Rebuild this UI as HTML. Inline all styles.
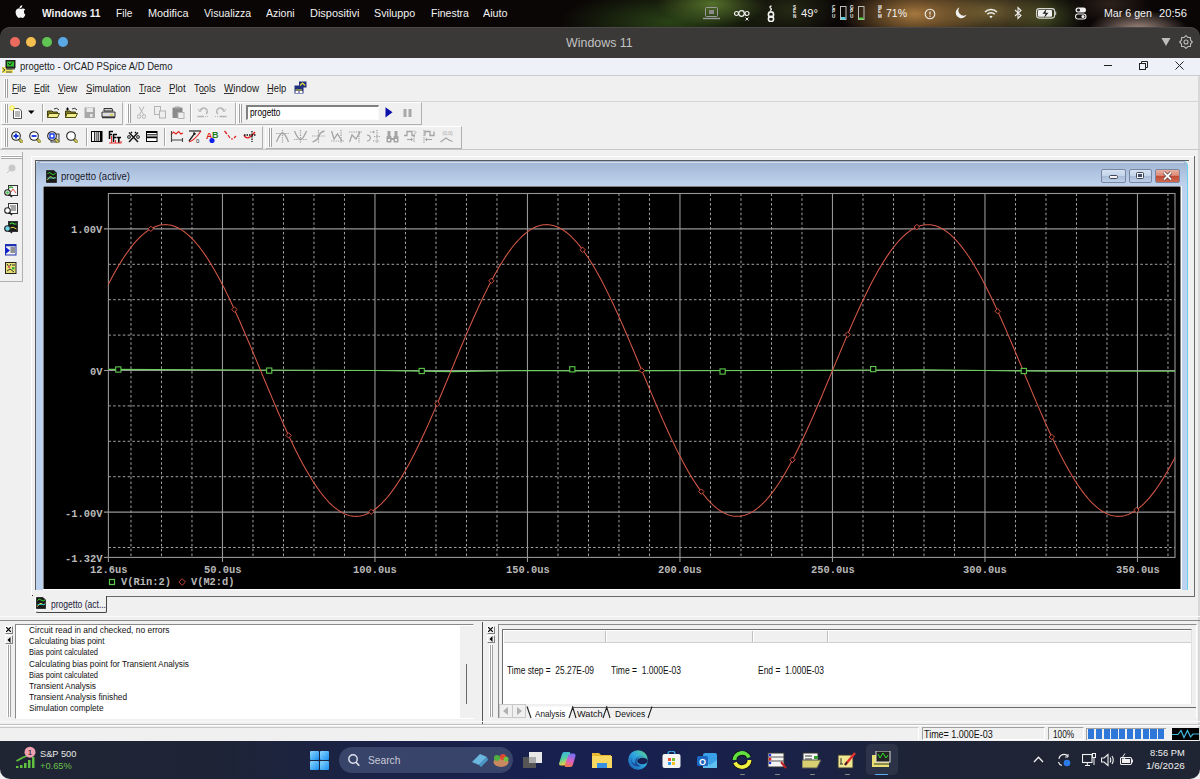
<!DOCTYPE html>
<html><head><meta charset="utf-8"><style>
html,body{margin:0;padding:0;width:1200px;height:779px;overflow:hidden;background:#f0f0f0;font-family:"Liberation Sans",sans-serif}
</style></head><body>
<div style="position:absolute;left:0px;top:0px;width:1200px;height:40px;background:radial-gradient(ellipse 55px 22px at 712px 4px, rgba(90,120,45,0.9), rgba(60,90,30,0) 100%),radial-gradient(ellipse 110px 34px at 670px 22px, rgba(45,72,24,0.9), rgba(40,60,20,0) 100%),radial-gradient(ellipse 50px 30px at 790px 10px, rgba(55,65,30,0.6), rgba(55,65,30,0) 100%),radial-gradient(ellipse 75px 32px at 915px 14px, rgba(165,120,62,1), rgba(140,100,50,0) 100%),radial-gradient(ellipse 70px 30px at 990px 12px, rgba(115,98,52,0.95), rgba(100,85,40,0) 100%),radial-gradient(ellipse 40px 26px at 1045px 16px, rgba(70,82,38,0.85), rgba(60,70,30,0) 100%),radial-gradient(ellipse 50px 20px at 1138px 30px, rgba(170,145,135,1), rgba(150,125,115,0) 100%),radial-gradient(ellipse 40px 20px at 1110px 4px, rgba(60,45,35,0.7), rgba(60,45,35,0) 100%),#0a0606"></div>
<div style="position:absolute;left:0px;top:27px;width:1200px;height:31px;background:#3a3938;border-radius:10px 10px 0 0;box-shadow:inset 0 1px 0 #4a4948"></div>
<div style="position:absolute;left:10.1px;top:36.9px;width:10px;height:10px;background:#ec6a5e;border-radius:50%"></div>
<div style="position:absolute;left:25.9px;top:36.9px;width:10px;height:10px;background:#f4bf4f;border-radius:50%"></div>
<div style="position:absolute;left:41.8px;top:36.9px;width:10px;height:10px;background:#61c554;border-radius:50%"></div>
<div style="position:absolute;left:57.6px;top:36.9px;width:10px;height:10px;background:#5aa9e6;border-radius:50%"></div>
<svg style="position:absolute;left:1161px;top:37px;" width="10" height="10" viewBox="0 0 10 10"><path d="M0.5,1 L9.5,1 L5,9 Z" fill="#bdbdbd"/></svg>
<svg style="position:absolute;left:1179px;top:35px;" width="14" height="14" viewBox="0 0 14 14"><g fill="none" stroke="#bdbdbd" stroke-width="1.1"><polygon points="13.30,7.00 11.53,8.88 11.45,11.45 8.88,11.53 7.00,13.30 5.12,11.53 2.55,11.45 2.47,8.88 0.70,7.00 2.47,5.12 2.55,2.55 5.12,2.47 7.00,0.70 8.88,2.47 11.45,2.55 11.53,5.12" stroke-linejoin="round"/><circle cx="7" cy="7" r="2"/></g></svg>
<div style="position:absolute;left:0px;top:57.5px;width:1200px;height:17.5px;background:#eef2f8"></div>
<div style="position:absolute;left:0px;top:74.5px;width:1200px;height:1px;background:#c9cbce"></div>
<div style="position:absolute;left:0px;top:75.5px;width:1200px;height:665.5px;background:#f0f0f0"></div>
<div style="position:absolute;left:1198px;top:75.5px;width:2px;height:665px;background:#d8d8d8"></div>
<svg style="position:absolute;left:1px;top:59px;" width="16" height="15" viewBox="0 0 16 15"><rect x="1" y="8" width="11" height="6" fill="#f0e860"/><path d="M1.5,9 L4,11 L1.5,13 M5,13 H11 M6,10 H11" stroke="#333" stroke-width="0.9" fill="none"/><rect x="4.5" y="1" width="10" height="8" fill="#222"/><rect x="6" y="2.5" width="7" height="5" fill="#30c030"/><path d="M7,4 L9,6 L11,3.5" stroke="#111" fill="none" stroke-width="0.9"/><rect x="5" y="9" width="9" height="1.5" fill="#555"/></svg>
<div style="position:absolute;left:1104px;top:65px;width:8px;height:1px;background:#222"></div>
<svg style="position:absolute;left:1139px;top:61px;" width="10" height="10" viewBox="0 0 10 10"><rect x="0.5" y="2.5" width="6" height="6" fill="none" stroke="#222"/><path d="M2.5,2.5 V0.5 H8.5 V6.5 H6.5" fill="none" stroke="#222"/></svg>
<svg style="position:absolute;left:1175px;top:61px;" width="10" height="10" viewBox="0 0 10 10"><path d="M0.5,0.5 L8.5,8.5 M8.5,0.5 L0.5,8.5" stroke="#222" stroke-width="1"/></svg>
<svg style="position:absolute;left:14.3px;top:5.2px;" width="12" height="14" viewBox="0 0 12 14"><path d="M8.2,2.6 C8.8,1.9 9.1,1 9,0 C8.2,0.1 7.3,0.6 6.7,1.3 C6.2,1.9 5.8,2.8 5.9,3.7 C6.8,3.8 7.6,3.3 8.2,2.6 Z M10.8,7.4 C10.8,5.8 12.1,5 12.2,5 C11.4,3.9 10.2,3.7 9.8,3.7 C8.8,3.6 7.8,4.3 7.3,4.3 C6.8,4.3 6,3.7 5.1,3.7 C4,3.7 2.9,4.4 2.3,5.4 C1.1,7.5 2,10.6 3.2,12.3 C3.8,13.1 4.4,14 5.3,14 C6.1,13.9 6.4,13.5 7.4,13.5 C8.4,13.5 8.6,14 9.5,14 C10.4,14 11,13.1 11.5,12.3 C12.1,11.4 12.4,10.5 12.4,10.4 C12.4,10.4 10.8,9.8 10.8,7.4 Z" fill="#f4f4f4" transform="scale(0.92)"/></svg>
<svg style="position:absolute;left:703px;top:7px;" width="17" height="13" viewBox="0 0 17 13"><rect x="2.5" y="0.5" width="12" height="9" rx="1" fill="none" stroke="#9a9a9a"/><rect x="6" y="3" width="5" height="4" fill="#8a8a8a"/><path d="M0,11.5 H17" stroke="#9a9a9a" stroke-width="1.4"/></svg>
<svg style="position:absolute;left:734px;top:9px;" width="16" height="12" viewBox="0 0 16 12"><circle cx="2.5" cy="4.5" r="2" fill="none" stroke="#f0f0f0" stroke-width="1.2"/><circle cx="7.5" cy="4.5" r="2.8" fill="none" stroke="#f0f0f0" stroke-width="1.3"/><circle cx="13" cy="4.5" r="2" fill="none" stroke="#f0f0f0" stroke-width="1.2"/><path d="M11.5,8.5 L14.5,11.5 M14.5,8.5 L11.5,11.5" stroke="#f0f0f0" stroke-width="1"/></svg>
<svg style="position:absolute;left:765px;top:5px;" width="12" height="17" viewBox="0 0 12 17"><path d="M6.5,1 Q4,1.5 5.5,3 Q7.5,4.5 5,5.5" fill="none" stroke="#f0f0f0" stroke-width="1.3"/><circle cx="6" cy="9.5" r="2.6" fill="none" stroke="#f0f0f0" stroke-width="1.6"/><circle cx="6" cy="14" r="2.6" fill="none" stroke="#f0f0f0" stroke-width="1.6"/></svg>
<div style="position:absolute;left:793px;top:5.5px;font:bold 4.6px/4.6px 'Liberation Sans',sans-serif;color:#f0f0f0">S</div><div style="position:absolute;left:793px;top:10.1px;font:bold 4.6px/4.6px 'Liberation Sans',sans-serif;color:#f0f0f0">E</div><div style="position:absolute;left:793px;top:14.7px;font:bold 4.6px/4.6px 'Liberation Sans',sans-serif;color:#f0f0f0">N</div>
<div style="position:absolute;left:832px;top:5.5px;font:bold 4.6px/4.6px 'Liberation Sans',sans-serif;color:#f0f0f0">C</div><div style="position:absolute;left:832px;top:10.1px;font:bold 4.6px/4.6px 'Liberation Sans',sans-serif;color:#f0f0f0">P</div><div style="position:absolute;left:832px;top:14.7px;font:bold 4.6px/4.6px 'Liberation Sans',sans-serif;color:#f0f0f0">U</div>
<div style="position:absolute;left:850px;top:5.5px;font:bold 4.6px/4.6px 'Liberation Sans',sans-serif;color:#f0f0f0">G</div><div style="position:absolute;left:850px;top:10.1px;font:bold 4.6px/4.6px 'Liberation Sans',sans-serif;color:#f0f0f0">P</div><div style="position:absolute;left:850px;top:14.7px;font:bold 4.6px/4.6px 'Liberation Sans',sans-serif;color:#f0f0f0">U</div>
<div style="position:absolute;left:878px;top:5.5px;font:bold 4.6px/4.6px 'Liberation Sans',sans-serif;color:#f0f0f0">M</div><div style="position:absolute;left:878px;top:10.1px;font:bold 4.6px/4.6px 'Liberation Sans',sans-serif;color:#f0f0f0">E</div><div style="position:absolute;left:878px;top:14.7px;font:bold 4.6px/4.6px 'Liberation Sans',sans-serif;color:#f0f0f0">M</div>
<svg style="position:absolute;left:840px;top:6px;" width="7" height="14" viewBox="0 0 7 14"><rect x="0.5" y="0.5" width="5.5" height="13" fill="none" stroke="#bdbdbd"/><rect x="1" y="11" width="4.5" height="2.5" fill="#5ad0e0"/></svg>
<svg style="position:absolute;left:858px;top:6px;" width="7" height="14" viewBox="0 0 7 14"><rect x="0.5" y="0.5" width="5.5" height="13" fill="none" stroke="#bdbdbd"/><rect x="1" y="11.5" width="4.5" height="2" fill="#50d040"/></svg>
<svg style="position:absolute;left:924px;top:8px;" width="12" height="12" viewBox="0 0 12 12"><circle cx="6" cy="6" r="4.8" fill="none" stroke="#f0f0f0" stroke-width="1.1"/><path d="M6,3.5 V6.5" stroke="#f0f0f0" stroke-width="1.2"/><circle cx="6" cy="8.3" r="0.7" fill="#f0f0f0"/></svg>
<svg style="position:absolute;left:955px;top:7px;" width="12" height="12" viewBox="0 0 12 12"><path d="M4.5,0.5 A5.5,5.5 0 1 0 11.5,7.5 A5,5 0 0 1 4.5,0.5 Z" fill="#f0f0f0"/></svg>
<svg style="position:absolute;left:984px;top:8px;" width="14" height="11" viewBox="0 0 14 11"><path d="M1,4 A8.5,8.5 0 0 1 13,4" fill="none" stroke="#f0f0f0" stroke-width="1.6"/><path d="M3.3,6.3 A5.2,5.2 0 0 1 10.7,6.3" fill="none" stroke="#f0f0f0" stroke-width="1.6"/><path d="M5.4,8.5 A2.3,2.3 0 0 1 8.6,8.5 L7,10.2 Z" fill="#f0f0f0"/></svg>
<svg style="position:absolute;left:1014px;top:6px;" width="8" height="14" viewBox="0 0 8 14"><path d="M1,4 L7,9.5 L4,12.5 V1.5 L7,4.5 L1,10" fill="none" stroke="#f0f0f0" stroke-width="1.1"/></svg>
<svg style="position:absolute;left:1036px;top:8px;" width="22" height="11" viewBox="0 0 22 11"><rect x="0.6" y="0.6" width="18" height="9.5" rx="2.5" fill="none" stroke="#d8d8d8" stroke-width="1.1"/><rect x="2" y="2" width="14" height="6.8" rx="1" fill="#f0f0f0"/><path d="M19.5,3.5 V7" stroke="#bbb" stroke-width="1.4"/><path d="M10.5,0.8 L6.5,5.8 H9.5 L8,10 L12.5,4.8 H9.5 Z" fill="#222"/></svg>
<svg style="position:absolute;left:1075px;top:7px;" width="12" height="13" viewBox="0 0 12 13"><rect x="0.5" y="0.5" width="10.5" height="5" rx="2.5" fill="#f0f0f0"/><circle cx="3.5" cy="3" r="1.6" fill="#222"/><rect x="0.5" y="7" width="10.5" height="5" rx="2.5" fill="none" stroke="#f0f0f0" stroke-width="1.1"/><circle cx="8" cy="9.5" r="1.6" fill="#f0f0f0"/></svg>
<div style="position:absolute;left:4px;top:79px;width:1px;height:19px;background:#fff;box-shadow:1px 0 0 #a0a0a0, 2px 0 0 #fff, 3px 0 0 #a0a0a0"></div>
<div style="position:absolute;left:12px;top:93px;width:6px;height:1px;background:#333"></div>
<div style="position:absolute;left:34px;top:93px;width:6px;height:1px;background:#333"></div>
<div style="position:absolute;left:58px;top:93px;width:6px;height:1px;background:#333"></div>
<div style="position:absolute;left:85.7px;top:93px;width:6px;height:1px;background:#333"></div>
<div style="position:absolute;left:138.7px;top:93px;width:6px;height:1px;background:#333"></div>
<div style="position:absolute;left:169px;top:93px;width:6px;height:1px;background:#333"></div>
<div style="position:absolute;left:200px;top:93px;width:6px;height:1px;background:#333"></div>
<div style="position:absolute;left:223.7px;top:93px;width:10px;height:1px;background:#333"></div>
<div style="position:absolute;left:266.7px;top:93px;width:6px;height:1px;background:#333"></div>
<svg style="position:absolute;left:294px;top:81px;" width="13" height="13" viewBox="0 0 13 13"><rect x="0.5" y="4.5" width="9" height="8" fill="#203080"/><rect x="5" y="0.5" width="7.5" height="6" fill="#203080"/><path d="M6,4.5 L8.5,2 L11,4.5" stroke="#e8e030" fill="none" stroke-width="1.2"/><path d="M1.5,9 H8" stroke="#e8e030"/><rect x="1.5" y="10" width="3" height="2" fill="#fff"/><rect x="5.5" y="10" width="3" height="2" fill="#fff"/></svg>
<div style="position:absolute;left:0px;top:100.5px;width:1200px;height:1px;background:#d5d5d5"></div>
<div style="position:absolute;left:0px;top:149px;width:1200px;height:1px;background:#c8c8c8"></div>
<div style="position:absolute;left:1px;top:101.5px;width:122px;height:23.0px;box-sizing:border-box;border-right:1px solid #b0b0b0;border-bottom:1px solid #b0b0b0;border-top:1px solid #fff;border-left:1px solid #fff"></div>
<div style="position:absolute;left:125px;top:101.5px;width:111px;height:23.0px;box-sizing:border-box;border-right:1px solid #b0b0b0;border-bottom:1px solid #b0b0b0;border-top:1px solid #fff;border-left:1px solid #fff"></div>
<div style="position:absolute;left:236px;top:101.5px;width:186px;height:23.0px;box-sizing:border-box;border-right:1px solid #b0b0b0;border-bottom:1px solid #b0b0b0;border-top:1px solid #fff;border-left:1px solid #fff"></div>
<div style="position:absolute;left:4px;top:104px;width:1px;height:19px;background:#fff;box-shadow:1px 0 0 #a0a0a0, 2px 0 0 #fff, 3px 0 0 #a0a0a0"></div>
<div style="position:absolute;left:127px;top:104px;width:1px;height:19px;background:#fff;box-shadow:1px 0 0 #a0a0a0, 2px 0 0 #fff, 3px 0 0 #a0a0a0"></div>
<div style="position:absolute;left:238px;top:104px;width:1px;height:19px;background:#fff;box-shadow:1px 0 0 #a0a0a0, 2px 0 0 #fff, 3px 0 0 #a0a0a0"></div>
<div style="position:absolute;left:1px;top:125.5px;width:262px;height:23.5px;box-sizing:border-box;border-right:1px solid #b0b0b0;border-bottom:1px solid #b0b0b0;border-top:1px solid #fff;border-left:1px solid #fff"></div>
<div style="position:absolute;left:265px;top:125.5px;width:197px;height:23.5px;box-sizing:border-box;border-right:1px solid #b0b0b0;border-bottom:1px solid #b0b0b0;border-top:1px solid #fff;border-left:1px solid #fff"></div>
<div style="position:absolute;left:4px;top:128px;width:1px;height:19px;background:#fff;box-shadow:1px 0 0 #a0a0a0, 2px 0 0 #fff, 3px 0 0 #a0a0a0"></div>
<div style="position:absolute;left:268px;top:128px;width:1px;height:19px;background:#fff;box-shadow:1px 0 0 #a0a0a0, 2px 0 0 #fff, 3px 0 0 #a0a0a0"></div>
<div style="position:absolute;left:41.5px;top:104px;width:1px;height:18px;background:#a8a8a8;box-shadow:1px 0 0 #fff"></div>
<div style="position:absolute;left:190.4px;top:104px;width:1px;height:18px;background:#a8a8a8;box-shadow:1px 0 0 #fff"></div>
<div style="position:absolute;left:85.8px;top:128px;width:1px;height:18px;background:#a8a8a8;box-shadow:1px 0 0 #fff"></div>
<div style="position:absolute;left:164.4px;top:128px;width:1px;height:18px;background:#a8a8a8;box-shadow:1px 0 0 #fff"></div>
<svg style="position:absolute;left:9px;top:105px;" width="14" height="14" viewBox="0 0 14 14"><path d="M4.5,3.5 H10 L12.5,6 V13.5 H4.5 Z" fill="#fff" stroke="#505050"/><path d="M6,7 H11 M6,9 H11 M6,11 H11" stroke="#707070"/><path d="M3,0 V6 M0,3 H6 M0.8,0.8 L5.2,5.2 M5.2,0.8 L0.8,5.2" stroke="#f8f040" stroke-width="1.1"/><circle cx="3" cy="3" r="1.4" fill="#fffbb0"/></svg>
<svg style="position:absolute;left:28px;top:110px;" width="7" height="5" viewBox="0 0 7 5"><path d="M0,0.5 H6.5 L3.25,4 Z" fill="#000"/></svg>
<svg style="position:absolute;left:47px;top:107px;" width="14" height="12" viewBox="0 0 14 12"><path d="M0.5,4 H5 L6,5 H10.5 V10.5 H0.5 Z" fill="#807a20" stroke="#403c10"/><path d="M2,6.5 H12.5 L10.5,10.5 H0.5 Z" fill="#f0ee90" stroke="#50500e"/><path d="M7,2 Q10,0 12,3" stroke="#333" fill="none"/></svg>
<svg style="position:absolute;left:65px;top:107px;" width="14" height="12" viewBox="0 0 14 12"><path d="M0.5,4 H5 L6,5 H10.5 V10.5 H0.5 Z" fill="#807a20" stroke="#403c10"/><path d="M2,6.5 H12.5 L10.5,10.5 H0.5 Z" fill="#f0ee90" stroke="#50500e"/><path d="M1,2 H4 M2.5,0.5 V3.5" stroke="#000"/><path d="M7,2 Q10,0 12,3" stroke="#333" fill="none"/></svg>
<svg style="position:absolute;left:84px;top:107px;" width="12" height="12" viewBox="0 0 12 12"><rect x="0.5" y="0.5" width="10.5" height="10.5" fill="#a8a8a8"/><rect x="2.5" y="1" width="6.5" height="4" fill="#e8e8e8"/><rect x="6" y="7" width="2.5" height="3" fill="#e8e8e8"/></svg>
<svg style="position:absolute;left:101px;top:106px;" width="15" height="13" viewBox="0 0 15 13"><path d="M3,2.5 H11 L12,5 H3 Z" fill="#ccc" stroke="#333"/><path d="M1,6 H14 V11 H1 Z" fill="#ddd" stroke="#333"/><rect x="9" y="8" width="3" height="1.5" fill="#e0d040"/><path d="M1,11.5 H14" stroke="#333" stroke-width="1.5"/></svg>
<svg style="position:absolute;left:137px;top:106px;" width="9" height="13" viewBox="0 0 9 13"><circle cx="2" cy="10.5" r="1.8" fill="none" stroke="#b4b4b4"/><circle cx="7" cy="10.5" r="1.8" fill="none" stroke="#b4b4b4"/><path d="M2.5,8.8 L7,0.5 M6.5,8.8 L2,0.5" stroke="#b4b4b4"/></svg>
<svg style="position:absolute;left:154px;top:106px;" width="13" height="13" viewBox="0 0 13 13"><rect x="0.5" y="0.5" width="6" height="8" fill="#eee" stroke="#b4b4b4"/><rect x="5.5" y="5" width="6" height="7" fill="#eee" stroke="#b4b4b4"/></svg>
<svg style="position:absolute;left:172px;top:106px;" width="13" height="13" viewBox="0 0 13 13"><rect x="0.5" y="1.5" width="10" height="10.5" rx="1" fill="#8a8a8a"/><rect x="6" y="6.5" width="6" height="6" fill="#eee" stroke="#b4b4b4"/><rect x="3" y="0.5" width="5" height="2" fill="#aaa"/></svg>
<svg style="position:absolute;left:197px;top:106px;" width="13" height="13" viewBox="0 0 13 13"><path d="M3,4 Q7,0 10,4 Q11,7 9,8" fill="none" stroke="#b4b4b4" stroke-width="1.3"/><path d="M1,3 L3,6 L5,3" fill="none" stroke="#b4b4b4"/><path d="M0.5,10.5 H7" stroke="#b4b4b4" stroke-width="1.5"/><path d="M8,10.5 H12" stroke="#b4b4b4" stroke-dasharray="1 1"/></svg>
<svg style="position:absolute;left:214px;top:106px;" width="13" height="13" viewBox="0 0 13 13"><path d="M10,4 Q6,0 3,4 Q2,7 4,8" fill="none" stroke="#b4b4b4" stroke-width="1.3"/><path d="M12,3 L10,6 L8,3" fill="none" stroke="#b4b4b4"/><path d="M5.5,10.5 H12.5" stroke="#b4b4b4" stroke-width="1.5"/><path d="M1,10.5 H5" stroke="#b4b4b4" stroke-dasharray="1 1"/></svg>
<div style="position:absolute;left:245.8px;top:105px;width:133px;height:14.7px;box-sizing:border-box;background:#fff;border-top:2px solid #808080;border-left:2px solid #808080;border-bottom:1px solid #fafafa;border-right:1px solid #fafafa"></div>
<svg style="position:absolute;left:385px;top:107px;" width="8" height="11" viewBox="0 0 8 11"><path d="M0.5,0.3 L7.5,5.3 L0.5,10.5 Z" fill="#0a10a8"/></svg>
<svg style="position:absolute;left:403px;top:108.5px;" width="9" height="8" viewBox="0 0 9 8"><rect x="0.5" y="0" width="3" height="8" fill="#a8a8a8"/><rect x="5.5" y="0" width="3" height="8" fill="#a8a8a8"/></svg>
<svg style="position:absolute;left:11px;top:130.5px;" width="12" height="12" viewBox="0 0 12 12"><path d="M7.5,7.5 L11.5,11.5" stroke="#505010" stroke-width="3"/><path d="M7.5,7.5 L11.5,11.5" stroke="#d8d060" stroke-width="1.6"/><circle cx="5" cy="5" r="4.3" fill="#fff" stroke="#222" stroke-width="1.1"/><path d="M2.5,5 H7.5 M5,2.5 V7.5" stroke="#1030e0" stroke-width="1.8"/></svg>
<svg style="position:absolute;left:29px;top:130.5px;" width="12" height="12" viewBox="0 0 12 12"><path d="M7.5,7.5 L11.5,11.5" stroke="#505010" stroke-width="3"/><path d="M7.5,7.5 L11.5,11.5" stroke="#d8d060" stroke-width="1.6"/><circle cx="5" cy="5" r="4.3" fill="#fff" stroke="#222" stroke-width="1.1"/><path d="M2.5,5 H7.5" stroke="#1030e0" stroke-width="1.8"/></svg>
<svg style="position:absolute;left:47px;top:130.5px;" width="13" height="12" viewBox="0 0 13 12"><rect x="4" y="3" width="8" height="8" fill="#ddd" stroke="#444"/><path d="M7.5,7.5 L11.5,11.5" stroke="#505010" stroke-width="3"/><path d="M7.5,7.5 L11.5,11.5" stroke="#d8d060" stroke-width="1.6"/><circle cx="5" cy="5" r="4.3" fill="#fff" stroke="#222" stroke-width="1.1"/><rect x="3" y="3" width="4" height="4" fill="none" stroke="#1030e0" stroke-width="1.4"/></svg>
<svg style="position:absolute;left:66px;top:130.5px;" width="12" height="12" viewBox="0 0 12 12"><path d="M7.5,7.5 L11.5,11.5" stroke="#505010" stroke-width="3"/><path d="M7.5,7.5 L11.5,11.5" stroke="#d8d060" stroke-width="1.6"/><circle cx="5" cy="5" r="4.3" fill="#fff" stroke="#222" stroke-width="1.1"/></svg>
<svg style="position:absolute;left:91px;top:131px;" width="12" height="11" viewBox="0 0 12 11"><rect x="0.5" y="0.5" width="10.5" height="10" fill="#fff" stroke="#000"/><rect x="1" y="1" width="1.5" height="9" fill="#fff"/><rect x="3" y="1" width="1" height="9" fill="#303030"/><rect x="4" y="1" width="1" height="9" fill="#c8c8c8"/><rect x="5" y="1" width="1" height="9" fill="#808080"/><rect x="6" y="1" width="1" height="9" fill="#a0a0a0"/><rect x="7" y="1" width="1" height="9" fill="#606060"/><rect x="8" y="1" width="1" height="9" fill="#d0d0d0"/><rect x="9" y="1" width="2" height="9" fill="#000"/></svg>
<svg style="position:absolute;left:108px;top:130px;" width="15" height="14" viewBox="0 0 15 14"><path d="M1.5,1 V9 M1.5,1.5 H5 M1.5,4.5 H4" stroke="#000" stroke-width="1.5" fill="none"/><path d="M5.5,4 V12 M5.5,4.5 H9 M5.5,7.5 H8" stroke="#000" stroke-width="1.5" fill="none"/><path d="M8.5,7.5 H13 M10.8,7.5 V13" stroke="#000" stroke-width="1.6" fill="none"/><path d="M1,13 H13.5 M3.5,6 V13 M7.5,10 V13 M13,11 V13" stroke="#e83030" stroke-width="1" fill="none"/></svg>
<svg style="position:absolute;left:127px;top:130.5px;" width="13" height="12" viewBox="0 0 13 12"><path d="M2,1.5 L11,11 M11,1.5 L2,11" stroke="#111" stroke-width="1.4"/><circle cx="2" cy="6" r="1.6" fill="#999" stroke="#333" stroke-width="0.8"/><circle cx="11" cy="6" r="1.6" fill="#999" stroke="#333" stroke-width="0.8"/><path d="M4,1 L5,2 M9,1 L8,2" stroke="#000" stroke-width="1.5"/></svg>
<svg style="position:absolute;left:145.8px;top:131px;" width="12" height="11" viewBox="0 0 12 11"><rect x="0.5" y="0.5" width="10.5" height="10" fill="#fff" stroke="#000"/><rect x="1" y="1" width="10" height="1" fill="#000"/><rect x="1" y="3" width="10" height="1" fill="#505050"/><rect x="1" y="4" width="10" height="1" fill="#b0b0b0"/><rect x="1" y="5" width="10" height="1" fill="#707070"/><rect x="1" y="6" width="10" height="1.2" fill="#000"/></svg>
<svg style="position:absolute;left:169.7px;top:130px;" width="14" height="13" viewBox="0 0 14 13"><path d="M1,5 L3.5,2 L6,4 L8.5,1.5 L11,4 L13,3" fill="none" stroke="#e02020" stroke-width="1.1"/><path d="M1.5,1 V12 M1.5,10 H13 M12.5,8 V12" stroke="#444" stroke-width="1.1"/></svg>
<svg style="position:absolute;left:187.8px;top:130px;" width="14" height="13" viewBox="0 0 14 13"><path d="M1,1 H13" stroke="#222" stroke-width="1.2"/><path d="M1,11 L7,3" stroke="#222" stroke-width="1.3"/><path d="M5,3 H7 V5" stroke="#222"/><path d="M1,12 Q7,10 13,1" stroke="#e02020" fill="none" stroke-width="1.1"/><text x="8" y="12.5" font-family="Liberation Sans" font-size="6" fill="#222">0</text></svg>
<svg style="position:absolute;left:205.8px;top:130px;" width="14" height="13" viewBox="0 0 14 13"><text x="0" y="9" font-family="Liberation Sans" font-weight="bold" font-size="9" fill="#e02020">A</text><text x="6" y="8" font-family="Liberation Sans" font-weight="bold" font-size="9" fill="#208020">B</text><circle cx="6" cy="10.5" r="2.6" fill="#1020f0"/></svg>
<svg style="position:absolute;left:224px;top:130px;" width="14" height="12" viewBox="0 0 14 12"><path d="M0.5,1 L3,4 M4,5 L6,8 M7,9 L9,9 M10,8 L12,6" stroke="#e02020" stroke-width="1.2"/></svg>
<svg style="position:absolute;left:242.6px;top:130px;" width="14" height="13" viewBox="0 0 14 13"><path d="M1,5 Q4,12 12,2" fill="none" stroke="#e02020" stroke-width="1.4"/><path d="M1,5 H13 M9,1 V12" stroke="#111" stroke-dasharray="1.5 1" stroke-width="1.3"/></svg>
<svg style="position:absolute;left:276px;top:130px;" width="14" height="14" viewBox="0 0 14 14"><path d="M0.5,12 Q4,3 6.5,3 Q9,3 12.5,12" fill="none" stroke="#a4a4a4" stroke-width="1.3"/><path d="M0,3.5 H13" stroke="#a4a4a4" stroke-width="1.2" stroke-dasharray="1.3 1"/><path d="M6.5,0 V13" stroke="#a4a4a4" stroke-width="1.2" stroke-dasharray="1.3 1"/></svg>
<svg style="position:absolute;left:294px;top:130px;" width="14" height="14" viewBox="0 0 14 14"><path d="M0.5,1 Q4,9.5 6.5,9.5 Q9,9.5 12.5,1" fill="none" stroke="#a4a4a4" stroke-width="1.3"/><path d="M0,9.5 H13" stroke="#a4a4a4" stroke-width="1.2" stroke-dasharray="1.3 1"/><path d="M6.5,0 V13" stroke="#a4a4a4" stroke-width="1.2" stroke-dasharray="1.3 1"/></svg>
<svg style="position:absolute;left:312px;top:130px;" width="14" height="14" viewBox="0 0 14 14"><path d="M0.5,12 Q6,10 7,6 Q8,2 12.5,1" fill="none" stroke="#a4a4a4" stroke-width="1.3"/><path d="M0,6 H13" stroke="#a4a4a4" stroke-width="1.2" stroke-dasharray="1.3 1"/><path d="M6.5,0 V13" stroke="#a4a4a4" stroke-width="1.2" stroke-dasharray="1.3 1"/></svg>
<svg style="position:absolute;left:331px;top:130px;" width="14" height="14" viewBox="0 0 14 14"><path d="M0.5,1 L3,9 L6.5,4 L11,11" fill="none" stroke="#a4a4a4" stroke-width="1.3"/><path d="M0,11 H13" stroke="#a4a4a4" stroke-width="1.2" stroke-dasharray="1.3 1"/><path d="M10,0 V13" stroke="#a4a4a4" stroke-width="1.2" stroke-dasharray="1.3 1"/></svg>
<svg style="position:absolute;left:349px;top:130px;" width="14" height="14" viewBox="0 0 14 14"><path d="M0.5,12 L3,5 L7,9 L11,2" fill="none" stroke="#a4a4a4" stroke-width="1.3"/><path d="M0,2 H13" stroke="#a4a4a4" stroke-width="1.2" stroke-dasharray="1.3 1"/><path d="M10,1 V13" stroke="#a4a4a4" stroke-width="1.2" stroke-dasharray="1.3 1"/></svg>
<svg style="position:absolute;left:367px;top:130px;" width="14" height="14" viewBox="0 0 14 14"><path d="M0,5 Q3,5 3.5,8 Q3,11 0,11" fill="none" stroke="#a4a4a4" stroke-width="1.1"/><path d="M3,2 H7" stroke="#a4a4a4" stroke-width="1.2" stroke-dasharray="1.3 1"/><path d="M6,0.5 L8,2 L6,3.5" fill="#a4a4a4"/><path d="M10,0 V13" stroke="#a4a4a4" stroke-width="1.2" stroke-dasharray="1.3 1"/><path d="M6,11 H13" stroke="#a4a4a4" stroke-width="1.2" stroke-dasharray="1.3 1"/><path d="M7,6.5 H13" stroke="#a4a4a4" stroke-width="1.2" stroke-dasharray="1.3 1"/></svg>
<svg style="position:absolute;left:386px;top:130px;" width="14" height="14" viewBox="0 0 14 14"><rect x="0.5" y="6" width="5" height="6.5" rx="1" fill="#a4a4a4"/><rect x="7.5" y="6" width="5" height="6.5" rx="1" fill="#a4a4a4"/><rect x="1.5" y="1" width="3" height="6" fill="#a4a4a4"/><rect x="8.5" y="1" width="3" height="6" fill="#a4a4a4"/><rect x="5" y="8" width="3" height="2" fill="#a4a4a4"/><rect x="2" y="9" width="2" height="2" fill="#eee"/><rect x="9" y="9" width="2" height="2" fill="#eee"/></svg>
<svg style="position:absolute;left:404px;top:130px;" width="14" height="14" viewBox="0 0 14 14"><path d="M0,5.5 H3 V1.5 H8 V5.5 H11" fill="none" stroke="#a4a4a4" stroke-width="1.3"/><path d="M10,0.5 L12,2.5 L10,4.5" fill="none" stroke="#a4a4a4"/><path d="M10,6 V13" stroke="#a4a4a4" stroke-width="1.2" stroke-dasharray="1.3 1"/><path d="M3,9.5 H8" fill="none" stroke="#a4a4a4" stroke-width="1.1"/><path d="M7,7.5 L9,9.5 L7,11.5" fill="#a4a4a4"/></svg>
<svg style="position:absolute;left:422px;top:130px;" width="14" height="14" viewBox="0 0 14 14"><path d="M3,5.5 V1.5 H8 V5.5 H12 V1.5" fill="none" stroke="#a4a4a4" stroke-width="1.3"/><path d="M2,0 V13" stroke="#a4a4a4" stroke-width="1.2" stroke-dasharray="1.3 1"/><path d="M4,9.5 H10" fill="none" stroke="#a4a4a4" stroke-width="1.1"/><path d="M5,7.5 L3,9.5 L5,11.5" fill="#a4a4a4"/></svg>
<svg style="position:absolute;left:440px;top:130px;" width="14" height="14" viewBox="0 0 14 14"><text x="2.5" y="5" font-family="Liberation Sans" font-size="5" fill="#a4a4a4">(0,0)</text><path d="M0.5,12 L6,8 L9,10 L12.5,11.5" fill="none" stroke="#a4a4a4" stroke-width="1.2"/></svg>
<div style="position:absolute;left:0px;top:151.5px;width:23.3px;height:130.5px;box-sizing:border-box;border-right:1px solid #b0b0b0;border-bottom:1px solid #b0b0b0"></div>
<div style="position:absolute;left:1px;top:155px;width:21px;height:1px;background:#fff;box-shadow:0 1px 0 #a8a8a8,0 2px 0 #fff,0 3px 0 #a8a8a8"></div>
<svg style="position:absolute;left:5.5px;top:163.5px;" width="11" height="10" viewBox="0 0 11 10"><circle cx="6" cy="4" r="3.5" fill="#c8c8c8"/><path d="M1,9 L4,6" stroke="#c0c0c0"/></svg>
<svg style="position:absolute;left:4px;top:184.5px;" width="14" height="13" viewBox="0 0 14 13"><rect x="4.5" y="0.5" width="9" height="10" fill="#f4f4f4" stroke="#333"/><path d="M5,3 Q7,1 9,3" stroke="#40b040" fill="none" stroke-width="1.2"/><path d="M7,7 L9,4 L12,8" stroke="#e05050" fill="none"/><circle cx="3.5" cy="7.5" r="2.8" fill="#e8f0e8" stroke="#222" stroke-width="1.1"/><circle cx="3.5" cy="7.5" r="1.3" fill="#40c040"/><path d="M5.5,9.5 L8,12" stroke="#222" stroke-width="1.6"/></svg>
<svg style="position:absolute;left:4px;top:202.5px;" width="14" height="13" viewBox="0 0 14 13"><rect x="4.5" y="0.5" width="9" height="10" fill="#f8f8f8" stroke="#333"/><path d="M6,3 H12 M7,5 H12 M7,7 H12" stroke="#555"/><circle cx="3.5" cy="7.5" r="2.8" fill="#fff" stroke="#222" stroke-width="1.1"/><path d="M5.5,9.5 L8,12" stroke="#222" stroke-width="1.6"/></svg>
<svg style="position:absolute;left:4px;top:221px;" width="14" height="13" viewBox="0 0 14 13"><rect x="4.5" y="0.5" width="9" height="10" fill="#1a1a1a" stroke="#333"/><path d="M6,3 Q8,1 10,3 H12.5" stroke="#40e040" fill="none" stroke-width="1.1"/><path d="M6,7 Q9,5 12.5,8" stroke="#e8e040" fill="none"/><circle cx="3.5" cy="7.5" r="2.8" fill="#70d8e8" stroke="#222" stroke-width="1.1"/><path d="M5.5,9.5 L8,12" stroke="#222" stroke-width="1.6"/></svg>
<svg style="position:absolute;left:5px;top:243.5px;" width="12" height="12" viewBox="0 0 12 12"><rect x="0.5" y="0.5" width="10.5" height="10.5" fill="#f0f0f0" stroke="#2030b0"/><rect x="0.5" y="0.5" width="10.5" height="1.8" fill="#2030b0"/><path d="M0.5,3 L5,6.5 L0.5,10 Z" fill="#1020d0"/><path d="M5.5,4 H10 M5.5,6 H10 M5.5,8 H10" stroke="#303030" stroke-width="1.1"/></svg>
<svg style="position:absolute;left:5px;top:261.5px;" width="12" height="12" viewBox="0 0 12 12"><rect x="0.5" y="0.5" width="10.5" height="11" fill="#e8e070" stroke="#222"/><path d="M2,2 L4,5 L6,2 M7,3 H10 M2,9 L5,7 L9,10" stroke="#333" fill="none"/><rect x="7" y="5" width="2.5" height="2.5" fill="#40b040"/><rect x="3" y="4" width="2" height="2" fill="#e06060"/></svg>
<div style="position:absolute;left:31px;top:155.5px;width:1163px;height:440px;background:#f0f0f0;box-shadow:inset 1px 1px 0 #fff"></div>
<div style="position:absolute;left:1193.5px;top:156px;width:1px;height:440px;background:#6a6a6a"></div>
<div style="position:absolute;left:36px;top:595.5px;width:1158.5px;height:1px;background:#6a6a6a"></div>
<div style="position:absolute;left:35px;top:159.8px;width:1153.5px;height:1.3px;background:#5a5a5a"></div>
<div style="position:absolute;left:35px;top:159.8px;width:1.3px;height:430px;background:#5a5a5a"></div>
<div style="position:absolute;left:36.3px;top:161.1px;width:1152px;height:429px;background:#bcd2ee;border-radius:4px 5px 0 0;box-shadow:inset -1px 0 0 #6ad0f0"></div>
<div style="position:absolute;left:36.3px;top:161.1px;width:1151px;height:25px;background:linear-gradient(#9eb4d2,#b4c8e4 60%,#bed2ee);border-radius:4px 5px 0 0"></div>
<div style="position:absolute;left:42.5px;top:185.5px;width:1139.5px;height:404px;background:#fff"></div>
<svg style="position:absolute;left:46px;top:170px;" width="11" height="13" viewBox="0 0 11 13"><path d="M0.5,0.5 H8 L10.5,3 V12.5 H0.5 Z" fill="#1a1a1a" stroke="#333"/><path d="M1.5,4 Q3,1 5,3.5 T9.5,3.5" stroke="#30d030" fill="none"/><path d="M1.5,10 Q4,5 6,7.5 T9.5,7" stroke="#e8e040" fill="none"/><path d="M1.5,8 H9.5" stroke="#30c0c0"/></svg>
<div style="position:absolute;left:1101px;top:169.4px;width:24.5px;height:13.2px;box-sizing:border-box;border:1px solid #7a86a0;border-radius:2px;background:linear-gradient(#d4e2f2,#c4d4ea 48%,#a8bcd8 52%,#bccfe8)"></div><div style="position:absolute;left:1109px;top:175.2px;width:8.5px;height:3.6px;background:#f6f6f6;border:1px solid #3c4658;box-sizing:border-box;border-radius:1.6px"></div>
<div style="position:absolute;left:1128.5px;top:169.4px;width:23.799999999999955px;height:13.2px;box-sizing:border-box;border:1px solid #7a86a0;border-radius:2px;background:linear-gradient(#d4e2f2,#c4d4ea 48%,#a8bcd8 52%,#bccfe8)"></div><div style="position:absolute;left:1135.6px;top:171.8px;width:8.6px;height:6.8px;box-sizing:border-box;border:1px solid #3c4658;border-radius:1.5px;background:#f6f6f6"></div><div style="position:absolute;left:1137.6px;top:173.8px;width:4.6px;height:2.8px;background:#404e6c"></div>
<div style="position:absolute;left:1155.2px;top:169.4px;width:24.5px;height:13.2px;box-sizing:border-box;border:1px solid #7a86a0;border-radius:2px;background:linear-gradient(#eab0a0,#dc8a78 45%,#c24a32 52%,#d06a52)"></div><svg style="position:absolute;left:1162px;top:171px;" width="11" height="10" viewBox="0 0 11 10"><path d="M2,1.5 L9,8.5 M9,1.5 L2,8.5" stroke="#5a3a3a" stroke-width="3.2"/><path d="M2,1.5 L9,8.5 M9,1.5 L2,8.5" stroke="#f8f8f8" stroke-width="1.8"/></svg>
<div style="position:absolute;left:40px;top:161.6px;width:1144px;height:1px;background:rgba(235,242,250,0.7)"></div>
<div style="position:absolute;left:31.5px;top:594.5px;width:1.5px;height:1.5px;background:#333"></div>
<div style="position:absolute;left:34.7px;top:595.5px;width:72px;height:17.5px;box-sizing:border-box;background:#f0f0f0;border-right:1.5px solid #444;border-bottom:1.5px solid #444;border-left:1px solid #fff;border-radius:0 0 2px 3px"></div>
<svg style="position:absolute;left:36px;top:597px;" width="10" height="12" viewBox="0 0 10 12"><path d="M0.5,0.5 H7 L9.5,3 V11.5 H0.5 Z" fill="#1a1a1a" stroke="#333"/><path d="M1.5,3.5 Q3,1 5,3 T9,3" stroke="#30d030" fill="none"/><path d="M1.5,9.5 Q4,5 6,7 T9,6.5" stroke="#e8e040" fill="none"/><path d="M1.5,7.5 H9" stroke="#30c0c0"/></svg>
<svg width="1200" height="779" style="position:absolute;left:0;top:0">
<rect x="43.5" y="186.5" width="1137" height="402.5" fill="#000"/>
<line x1="130.97" y1="193.5" x2="130.97" y2="557.412" stroke="#a4a4a4" stroke-width="1" stroke-dasharray="2.5 2.3"/>
<line x1="161.47" y1="193.5" x2="161.47" y2="557.412" stroke="#a4a4a4" stroke-width="1" stroke-dasharray="2.5 2.3"/>
<line x1="191.97" y1="193.5" x2="191.97" y2="557.412" stroke="#a4a4a4" stroke-width="1" stroke-dasharray="2.5 2.3"/>
<line x1="252.97" y1="193.5" x2="252.97" y2="557.412" stroke="#a4a4a4" stroke-width="1" stroke-dasharray="2.5 2.3"/>
<line x1="283.47" y1="193.5" x2="283.47" y2="557.412" stroke="#a4a4a4" stroke-width="1" stroke-dasharray="2.5 2.3"/>
<line x1="313.97" y1="193.5" x2="313.97" y2="557.412" stroke="#a4a4a4" stroke-width="1" stroke-dasharray="2.5 2.3"/>
<line x1="344.47" y1="193.5" x2="344.47" y2="557.412" stroke="#a4a4a4" stroke-width="1" stroke-dasharray="2.5 2.3"/>
<line x1="405.47" y1="193.5" x2="405.47" y2="557.412" stroke="#a4a4a4" stroke-width="1" stroke-dasharray="2.5 2.3"/>
<line x1="435.97" y1="193.5" x2="435.97" y2="557.412" stroke="#a4a4a4" stroke-width="1" stroke-dasharray="2.5 2.3"/>
<line x1="466.47" y1="193.5" x2="466.47" y2="557.412" stroke="#a4a4a4" stroke-width="1" stroke-dasharray="2.5 2.3"/>
<line x1="496.97" y1="193.5" x2="496.97" y2="557.412" stroke="#a4a4a4" stroke-width="1" stroke-dasharray="2.5 2.3"/>
<line x1="557.97" y1="193.5" x2="557.97" y2="557.412" stroke="#a4a4a4" stroke-width="1" stroke-dasharray="2.5 2.3"/>
<line x1="588.47" y1="193.5" x2="588.47" y2="557.412" stroke="#a4a4a4" stroke-width="1" stroke-dasharray="2.5 2.3"/>
<line x1="618.97" y1="193.5" x2="618.97" y2="557.412" stroke="#a4a4a4" stroke-width="1" stroke-dasharray="2.5 2.3"/>
<line x1="649.47" y1="193.5" x2="649.47" y2="557.412" stroke="#a4a4a4" stroke-width="1" stroke-dasharray="2.5 2.3"/>
<line x1="710.47" y1="193.5" x2="710.47" y2="557.412" stroke="#a4a4a4" stroke-width="1" stroke-dasharray="2.5 2.3"/>
<line x1="740.97" y1="193.5" x2="740.97" y2="557.412" stroke="#a4a4a4" stroke-width="1" stroke-dasharray="2.5 2.3"/>
<line x1="771.47" y1="193.5" x2="771.47" y2="557.412" stroke="#a4a4a4" stroke-width="1" stroke-dasharray="2.5 2.3"/>
<line x1="801.97" y1="193.5" x2="801.97" y2="557.412" stroke="#a4a4a4" stroke-width="1" stroke-dasharray="2.5 2.3"/>
<line x1="862.97" y1="193.5" x2="862.97" y2="557.412" stroke="#a4a4a4" stroke-width="1" stroke-dasharray="2.5 2.3"/>
<line x1="893.47" y1="193.5" x2="893.47" y2="557.412" stroke="#a4a4a4" stroke-width="1" stroke-dasharray="2.5 2.3"/>
<line x1="923.97" y1="193.5" x2="923.97" y2="557.412" stroke="#a4a4a4" stroke-width="1" stroke-dasharray="2.5 2.3"/>
<line x1="954.47" y1="193.5" x2="954.47" y2="557.412" stroke="#a4a4a4" stroke-width="1" stroke-dasharray="2.5 2.3"/>
<line x1="1015.47" y1="193.5" x2="1015.47" y2="557.412" stroke="#a4a4a4" stroke-width="1" stroke-dasharray="2.5 2.3"/>
<line x1="1045.97" y1="193.5" x2="1045.97" y2="557.412" stroke="#a4a4a4" stroke-width="1" stroke-dasharray="2.5 2.3"/>
<line x1="1076.47" y1="193.5" x2="1076.47" y2="557.412" stroke="#a4a4a4" stroke-width="1" stroke-dasharray="2.5 2.3"/>
<line x1="1106.97" y1="193.5" x2="1106.97" y2="557.412" stroke="#a4a4a4" stroke-width="1" stroke-dasharray="2.5 2.3"/>
<line x1="1167.97" y1="193.5" x2="1167.97" y2="557.412" stroke="#a4a4a4" stroke-width="1" stroke-dasharray="2.5 2.3"/>
<line x1="108.4" y1="264.3" x2="1175.0" y2="264.3" stroke="#a4a4a4" stroke-width="1" stroke-dasharray="2.5 2.3"/>
<line x1="108.4" y1="299.7" x2="1175.0" y2="299.7" stroke="#a4a4a4" stroke-width="1" stroke-dasharray="2.5 2.3"/>
<line x1="108.4" y1="335.1" x2="1175.0" y2="335.1" stroke="#a4a4a4" stroke-width="1" stroke-dasharray="2.5 2.3"/>
<line x1="108.4" y1="405.9" x2="1175.0" y2="405.9" stroke="#a4a4a4" stroke-width="1" stroke-dasharray="2.5 2.3"/>
<line x1="108.4" y1="441.3" x2="1175.0" y2="441.3" stroke="#a4a4a4" stroke-width="1" stroke-dasharray="2.5 2.3"/>
<line x1="108.4" y1="476.7" x2="1175.0" y2="476.7" stroke="#a4a4a4" stroke-width="1" stroke-dasharray="2.5 2.3"/>
<line x1="108.4" y1="547.5" x2="1175.0" y2="547.5" stroke="#a4a4a4" stroke-width="1" stroke-dasharray="2.5 2.3"/>
<line x1="222.47" y1="193.5" x2="222.47" y2="561.912" stroke="#969696" stroke-width="1.1"/>
<line x1="374.97" y1="193.5" x2="374.97" y2="561.912" stroke="#969696" stroke-width="1.1"/>
<line x1="527.47" y1="193.5" x2="527.47" y2="561.912" stroke="#969696" stroke-width="1.1"/>
<line x1="679.97" y1="193.5" x2="679.97" y2="561.912" stroke="#969696" stroke-width="1.1"/>
<line x1="832.47" y1="193.5" x2="832.47" y2="561.912" stroke="#969696" stroke-width="1.1"/>
<line x1="984.97" y1="193.5" x2="984.97" y2="561.912" stroke="#969696" stroke-width="1.1"/>
<line x1="1137.47" y1="193.5" x2="1137.47" y2="561.912" stroke="#969696" stroke-width="1.1"/>
<line x1="103.9" y1="228.9" x2="1175.0" y2="228.9" stroke="#969696" stroke-width="1.1"/>
<line x1="103.9" y1="370.5" x2="1175.0" y2="370.5" stroke="#969696" stroke-width="1.1"/>
<line x1="103.9" y1="512.1" x2="1175.0" y2="512.1" stroke="#969696" stroke-width="1.1"/>
<rect x="108.4" y="193.5" width="1066.6" height="363.91200000000003" fill="none" stroke="#969696" stroke-width="1.1"/>
<line x1="103.9" y1="557.412" x2="108.4" y2="557.412" stroke="#969696" stroke-width="1.1"/>
<line x1="108.4" y1="557.412" x2="108.4" y2="561.912" stroke="#969696" stroke-width="1.1"/>
<polyline fill="none" stroke="#6cd05c" stroke-width="1.1" points="108.4,369.4 375.0,370.5 451.2,371.6 527.5,370.5 573.2,370.9 771.5,370.5 924.0,369.7 985.0,370.5 1046.0,371.3 1175.3,371.3"/>
<polyline fill="none" stroke="#d65848" stroke-width="1.05" points="108.40,284.18 109.59,281.90 110.77,279.66 111.96,277.44 113.14,275.27 114.33,273.13 115.51,271.03 116.70,268.96 117.88,266.94 119.07,264.95 120.25,263.01 121.44,261.10 122.62,259.24 123.81,257.42 124.99,255.64 126.18,253.91 127.36,252.22 128.55,250.57 129.73,248.98 130.92,247.42 132.10,245.92 133.29,244.46 134.47,243.05 135.66,241.69 136.84,240.38 138.03,239.12 139.21,237.91 140.40,236.75 141.58,235.64 142.77,234.58 143.95,233.57 145.14,232.62 146.32,231.71 147.51,230.86 148.69,230.07 149.88,229.33 151.06,228.64 152.25,228.00 153.43,227.42 154.62,226.90 155.80,226.43 156.99,226.01 158.17,225.65 159.36,225.35 160.54,225.10 161.73,224.90 162.92,224.76 164.10,224.68 165.29,224.65 166.47,224.68 167.66,224.76 168.84,224.90 170.03,225.10 171.21,225.35 172.40,225.65 173.58,226.01 174.77,226.43 175.95,226.90 177.14,227.43 178.32,228.01 179.51,228.64 180.69,229.33 181.88,230.07 183.06,230.87 184.25,231.72 185.43,232.62 186.62,233.57 187.80,234.58 188.99,235.64 190.17,236.75 191.36,237.91 192.54,239.12 193.73,240.39 194.91,241.70 196.10,243.06 197.28,244.47 198.47,245.93 199.65,247.43 200.84,248.98 202.02,250.58 203.21,252.23 204.39,253.92 205.58,255.65 206.76,257.43 207.95,259.25 209.13,261.11 210.32,263.02 211.50,264.96 212.69,266.95 213.87,268.97 215.06,271.04 216.25,273.14 217.43,275.28 218.62,277.45 219.80,279.67 220.99,281.91 222.17,284.19 223.36,286.50 224.54,288.85 225.73,291.22 226.91,293.63 228.10,296.07 229.28,298.53 230.47,301.02 231.65,303.54 232.84,306.08 234.02,308.65 235.21,311.24 236.39,313.85 237.58,316.49 238.76,319.15 239.95,321.82 241.13,324.52 242.32,327.23 243.50,329.96 244.69,332.70 245.87,335.46 247.06,338.23 248.24,341.02 249.43,343.81 250.61,346.62 251.80,349.43 252.98,352.25 254.17,355.08 255.35,357.92 256.54,360.76 257.72,363.60 258.91,366.45 260.09,369.30 261.28,372.14 262.46,374.99 263.65,377.84 264.83,380.68 266.02,383.52 267.20,386.36 268.39,389.18 269.58,392.01 270.76,394.82 271.95,397.62 273.13,400.42 274.32,403.20 275.50,405.97 276.69,408.72 277.87,411.47 279.06,414.19 280.24,416.90 281.43,419.59 282.61,422.27 283.80,424.92 284.98,427.55 286.17,430.16 287.35,432.75 288.54,435.31 289.72,437.85 290.91,440.37 292.09,442.85 293.28,445.31 294.46,447.74 295.65,450.15 296.83,452.52 298.02,454.86 299.20,457.16 300.39,459.44 301.57,461.68 302.76,463.88 303.94,466.05 305.13,468.19 306.31,470.28 307.50,472.34 308.68,474.36 309.87,476.34 311.05,478.28 312.24,480.18 313.42,482.04 314.61,483.85 315.79,485.62 316.98,487.35 318.16,489.03 319.35,490.67 320.53,492.26 321.72,493.80 322.91,495.30 324.09,496.75 325.28,498.15 326.46,499.51 327.65,500.81 328.83,502.07 330.02,503.27 331.20,504.42 332.39,505.53 333.57,506.58 334.76,507.58 335.94,508.52 337.13,509.42 338.31,510.26 339.50,511.05 340.68,511.78 341.87,512.46 343.05,513.09 344.24,513.66 345.42,514.18 346.61,514.64 347.79,515.05 348.98,515.40 350.16,515.69 351.35,515.94 352.53,516.12 353.72,516.25 354.90,516.33 356.09,516.35 357.27,516.31 358.46,516.22 359.64,516.07 360.83,515.87 362.01,515.61 363.20,515.30 364.38,514.93 365.57,514.50 366.75,514.02 367.94,513.49 369.12,512.90 370.31,512.26 371.49,511.56 372.68,510.81 373.86,510.01 375.05,509.15 376.24,508.24 377.42,507.28 378.61,506.26 379.79,505.20 380.98,504.08 382.16,502.91 383.35,501.69 384.53,500.42 385.72,499.10 386.90,497.73 388.09,496.32 389.27,494.85 390.46,493.34 391.64,491.78 392.83,490.17 394.01,488.52 395.20,486.83 396.38,485.09 397.57,483.30 398.75,481.48 399.94,479.61 401.12,477.69 402.31,475.74 403.49,473.75 404.68,471.72 405.86,469.65 407.05,467.54 408.23,465.40 409.42,463.22 410.60,461.00 411.79,458.75 412.97,456.46 414.16,454.15 415.34,451.80 416.53,449.42 417.71,447.01 418.90,444.57 420.08,442.10 421.27,439.60 422.45,437.08 423.64,434.53 424.82,431.96 426.01,429.37 427.19,426.75 428.38,424.11 429.57,421.45 430.75,418.77 431.94,416.08 433.12,413.36 434.31,410.63 435.49,407.89 436.68,405.13 437.86,402.35 439.05,399.57 440.23,396.77 441.42,393.96 442.60,391.15 443.79,388.32 444.97,385.49 446.16,382.66 447.34,379.82 448.53,376.97 449.71,374.12 450.90,371.28 452.08,368.43 453.27,365.58 454.45,362.73 455.64,359.89 456.82,357.05 458.01,354.22 459.19,351.39 460.38,348.57 461.56,345.76 462.75,342.96 463.93,340.16 465.12,337.38 466.30,334.62 467.49,331.86 468.67,329.12 469.86,326.40 471.04,323.69 472.23,321.00 473.41,318.33 474.60,315.68 475.78,313.06 476.97,310.45 478.15,307.86 479.34,305.30 480.52,302.77 481.71,300.26 482.90,297.78 484.08,295.32 485.27,292.89 486.45,290.50 487.64,288.13 488.82,285.80 490.01,283.49 491.19,281.22 492.38,278.99 493.56,276.79 494.75,274.62 495.93,272.49 497.12,270.40 498.30,268.35 499.49,266.34 500.67,264.36 501.86,262.43 503.04,260.54 504.23,258.69 505.41,256.88 506.60,255.12 507.78,253.40 508.97,251.72 510.15,250.09 511.34,248.51 512.52,246.97 513.71,245.48 514.89,244.03 516.08,242.64 517.26,241.29 518.45,240.00 519.63,238.75 520.82,237.55 522.00,236.41 523.19,235.31 524.37,234.27 525.56,233.28 526.74,232.34 527.93,231.45 529.11,230.62 530.30,229.84 531.48,229.11 532.67,228.44 533.85,227.82 535.04,227.26 536.23,226.75 537.41,226.30 538.60,225.90 539.78,225.55 540.97,225.27 542.15,225.03 543.34,224.85 544.52,224.73 545.71,224.67 546.89,224.65 548.08,224.70 549.26,224.80 550.45,224.96 551.63,225.17 552.82,225.43 554.00,225.76 555.19,226.13 556.37,226.57 557.56,227.05 558.74,227.59 559.93,228.19 561.11,228.84 562.30,229.55 563.48,230.31 564.67,231.12 565.85,231.98 567.04,232.90 568.22,233.87 569.41,234.89 570.59,235.97 571.78,237.09 572.96,238.27 574.15,239.50 575.33,240.78 576.52,242.10 577.70,243.48 578.89,244.90 580.07,246.37 581.26,247.89 582.44,249.46 583.63,251.07 584.81,252.73 586.00,254.43 587.18,256.18 588.37,257.97 589.56,259.80 590.74,261.68 591.93,263.60 593.11,265.55 594.30,267.55 595.48,269.59 596.67,271.66 597.85,273.78 599.04,275.93 600.22,278.12 601.41,280.34 602.59,282.59 603.78,284.88 604.96,287.20 606.15,289.56 607.33,291.94 608.52,294.36 609.70,296.80 610.89,299.27 612.07,301.77 613.26,304.30 614.44,306.85 615.63,309.43 616.81,312.02 618.00,314.64 619.18,317.29 620.37,319.95 621.55,322.63 622.74,325.33 623.92,328.05 625.11,330.78 626.29,333.53 627.48,336.29 628.66,339.07 629.85,341.85 631.03,344.65 632.22,347.46 633.40,350.28 634.59,353.10 635.77,355.93 636.96,358.77 638.14,361.61 639.33,364.46 640.51,367.30 641.70,370.15 642.89,373.00 644.07,375.85 645.26,378.69 646.44,381.54 647.63,384.37 648.81,387.21 650.00,390.03 651.18,392.85 652.37,395.66 653.55,398.46 654.74,401.25 655.92,404.03 657.11,406.80 658.29,409.55 659.48,412.29 660.66,415.01 661.85,417.71 663.03,420.40 664.22,423.06 665.40,425.71 666.59,428.34 667.77,430.94 668.96,433.52 670.14,436.08 671.33,438.61 672.51,441.12 673.70,443.59 674.88,446.05 676.07,448.47 677.25,450.86 678.44,453.22 679.62,455.55 680.81,457.85 681.99,460.11 683.18,462.34 684.36,464.54 685.55,466.70 686.73,468.82 687.92,470.91 689.10,472.95 690.29,474.96 691.47,476.93 692.66,478.86 693.84,480.74 695.03,482.59 696.22,484.39 697.40,486.14 698.59,487.86 699.77,489.53 700.96,491.15 702.14,492.73 703.33,494.26 704.51,495.74 705.70,497.18 706.88,498.57 708.07,499.90 709.25,501.19 710.44,502.43 711.62,503.62 712.81,504.76 713.99,505.85 715.18,506.88 716.36,507.87 717.55,508.80 718.73,509.68 719.92,510.50 721.10,511.27 722.29,511.99 723.47,512.65 724.66,513.26 725.84,513.82 727.03,514.32 728.21,514.77 729.40,515.16 730.58,515.49 731.77,515.77 732.95,516.00 734.14,516.17 735.32,516.28 736.51,516.34 737.69,516.34 738.88,516.29 740.06,516.18 741.25,516.02 742.43,515.80 743.62,515.52 744.80,515.19 745.99,514.81 747.17,514.36 748.36,513.87 749.55,513.32 750.73,512.71 751.92,512.06 753.10,511.34 754.29,510.58 755.47,509.76 756.66,508.88 757.84,507.96 759.03,506.98 760.21,505.95 761.40,504.87 762.58,503.73 763.77,502.55 764.95,501.31 766.14,500.03 767.32,498.69 768.51,497.31 769.69,495.88 770.88,494.40 772.06,492.87 773.25,491.30 774.43,489.68 775.62,488.02 776.80,486.31 777.99,484.56 779.17,482.76 780.36,480.92 781.54,479.04 782.73,477.11 783.91,475.15 785.10,473.15 786.28,471.10 787.47,469.02 788.65,466.90 789.84,464.75 791.02,462.55 792.21,460.33 793.39,458.07 794.58,455.77 795.76,453.44 796.95,451.09 798.13,448.70 799.32,446.28 800.50,443.83 801.69,441.35 802.88,438.85 804.06,436.32 805.25,433.76 806.43,431.19 807.62,428.58 808.80,425.96 809.99,423.32 811.17,420.65 812.36,417.97 813.54,415.26 814.73,412.54 815.91,409.81 817.10,407.06 818.28,404.29 819.47,401.52 820.65,398.73 821.84,395.93 823.02,393.12 824.21,390.30 825.39,387.47 826.58,384.64 827.76,381.80 828.95,378.96 830.13,376.12 831.32,373.27 832.50,370.42 833.69,367.57 834.87,364.73 836.06,361.88 837.24,359.04 838.43,356.20 839.61,353.37 840.80,350.54 841.98,347.73 843.17,344.92 844.35,342.12 845.54,339.33 846.72,336.55 847.91,333.79 849.09,331.04 850.28,328.30 851.46,325.59 852.65,322.88 853.83,320.20 855.02,317.54 856.21,314.89 857.39,312.27 858.58,309.67 859.76,307.09 860.95,304.54 862.13,302.01 863.32,299.51 864.50,297.04 865.69,294.59 866.87,292.17 868.06,289.78 869.24,287.43 870.43,285.10 871.61,282.81 872.80,280.55 873.98,278.32 875.17,276.13 876.35,273.98 877.54,271.86 878.72,269.78 879.91,267.74 881.09,265.74 882.28,263.78 883.46,261.86 884.65,259.98 885.83,258.14 887.02,256.35 888.20,254.59 889.39,252.89 890.57,251.23 891.76,249.61 892.94,248.04 894.13,246.52 895.31,245.04 896.50,243.61 897.68,242.23 898.87,240.90 900.05,239.62 901.24,238.39 902.42,237.20 903.61,236.07 904.79,234.99 905.98,233.97 907.16,232.99 908.35,232.07 909.54,231.20 910.72,230.38 911.91,229.62 913.09,228.91 914.28,228.25 915.46,227.65 916.65,227.10 917.83,226.61 919.02,226.17 920.20,225.79 921.39,225.46 922.57,225.19 923.76,224.97 924.94,224.81 926.13,224.71 927.31,224.66 928.50,224.66 929.68,224.72 930.87,224.84 932.05,225.01 933.24,225.24 934.42,225.52 935.61,225.86 936.79,226.26 937.98,226.71 939.16,227.21 940.35,227.77 941.53,228.38 942.72,229.05 943.90,229.77 945.09,230.54 946.27,231.37 947.46,232.25 948.64,233.19 949.83,234.17 951.01,235.21 952.20,236.30 953.38,237.44 954.57,238.63 955.75,239.88 956.94,241.17 958.12,242.51 959.31,243.90 960.49,245.34 961.68,246.82 962.87,248.36 964.05,249.94 965.24,251.56 966.42,253.24 967.61,254.95 968.79,256.71 969.98,258.52 971.16,260.36 972.35,262.25 973.53,264.18 974.72,266.15 975.90,268.16 977.09,270.21 978.27,272.30 979.46,274.42 980.64,276.58 981.83,278.78 983.01,281.01 984.20,283.28 985.38,285.58 986.57,287.91 987.75,290.27 988.94,292.67 990.12,295.09 991.31,297.54 992.49,300.02 993.68,302.53 994.86,305.06 996.05,307.62 997.23,310.20 998.42,312.81 999.60,315.43 1000.79,318.08 1001.97,320.75 1003.16,323.44 1004.34,326.14 1005.53,328.87 1006.71,331.60 1007.90,334.36 1009.08,337.12 1010.27,339.90 1011.45,342.69 1012.64,345.49 1013.82,348.30 1015.01,351.12 1016.20,353.95 1017.38,356.78 1018.57,359.62 1019.75,362.46 1020.94,365.31 1022.12,368.16 1023.31,371.01 1024.49,373.85 1025.68,376.70 1026.86,379.55 1028.05,382.39 1029.23,385.22 1030.42,388.06 1031.60,390.88 1032.79,393.70 1033.97,396.50 1035.16,399.30 1036.34,402.09 1037.53,404.86 1038.71,407.63 1039.90,410.37 1041.08,413.10 1042.27,415.82 1043.45,418.52 1044.64,421.20 1045.82,423.86 1047.01,426.50 1048.19,429.12 1049.38,431.72 1050.56,434.29 1051.75,436.84 1052.93,439.37 1054.12,441.86 1055.30,444.33 1056.49,446.78 1057.67,449.19 1058.86,451.57 1060.04,453.92 1061.23,456.25 1062.41,458.53 1063.60,460.79 1064.78,463.01 1065.97,465.19 1067.15,467.34 1068.34,469.45 1069.53,471.53 1070.71,473.56 1071.90,475.56 1073.08,477.51 1074.27,479.43 1075.45,481.30 1076.64,483.13 1077.82,484.92 1079.01,486.66 1080.19,488.36 1081.38,490.02 1082.56,491.63 1083.75,493.19 1084.93,494.71 1086.12,496.18 1087.30,497.60 1088.49,498.97 1089.67,500.30 1090.86,501.57 1092.04,502.80 1093.23,503.97 1094.41,505.09 1095.60,506.16 1096.78,507.18 1097.97,508.15 1099.15,509.07 1100.34,509.93 1101.52,510.74 1102.71,511.49 1103.89,512.20 1105.08,512.84 1106.26,513.44 1107.45,513.98 1108.63,514.46 1109.82,514.89 1111.00,515.26 1112.19,515.58 1113.37,515.85 1114.56,516.05 1115.74,516.21 1116.93,516.30 1118.11,516.35 1119.30,516.33 1120.48,516.26 1121.67,516.14 1122.86,515.96 1124.04,515.72 1125.23,515.43 1126.41,515.08 1127.60,514.68 1128.78,514.22 1129.97,513.71 1131.15,513.14 1132.34,512.52 1133.52,511.85 1134.71,511.12 1135.89,510.34 1137.08,509.50 1138.26,508.61 1139.45,507.67 1140.63,506.67 1141.82,505.63 1143.00,504.53 1144.19,503.38 1145.37,502.18 1146.56,500.93 1147.74,499.63 1148.93,498.28 1150.11,496.89 1151.30,495.44 1152.48,493.95 1153.67,492.41 1154.85,490.82 1156.04,489.19 1157.22,487.51 1158.41,485.79 1159.59,484.02 1160.78,482.21 1161.96,480.36 1163.15,478.46 1164.33,476.53 1165.52,474.55 1166.70,472.54 1167.89,470.48 1169.07,468.39 1170.26,466.26 1171.44,464.09 1172.63,461.89 1173.81,459.65 1175.00,457.38"/>
<path d="M150.8,226.1 L153.5,228.8 L150.8,231.5 L148.1,228.8 Z" fill="#000" stroke="#cc4c3c" stroke-width="1"/>
<path d="M234.4,306.8 L237.1,309.5 L234.4,312.2 L231.7,309.5 Z" fill="#000" stroke="#cc4c3c" stroke-width="1"/>
<path d="M288.6,432.7 L291.3,435.4 L288.6,438.1 L285.9,435.4 Z" fill="#000" stroke="#cc4c3c" stroke-width="1"/>
<path d="M371.3,509.0 L374.0,511.7 L371.3,514.4 L368.6,511.7 Z" fill="#000" stroke="#cc4c3c" stroke-width="1"/>
<path d="M437.3,401.0 L440.0,403.7 L437.3,406.4 L434.6,403.7 Z" fill="#000" stroke="#cc4c3c" stroke-width="1"/>
<path d="M491.4,278.1 L494.1,280.8 L491.4,283.5 L488.7,280.8 Z" fill="#000" stroke="#cc4c3c" stroke-width="1"/>
<path d="M582.7,247.1 L585.4,249.8 L582.7,252.5 L580.0,249.8 Z" fill="#000" stroke="#cc4c3c" stroke-width="1"/>
<path d="M641.8,367.7 L644.5,370.4 L641.8,373.1 L639.1,370.4 Z" fill="#000" stroke="#cc4c3c" stroke-width="1"/>
<path d="M701.3,488.9 L704.0,491.6 L701.3,494.3 L698.6,491.6 Z" fill="#000" stroke="#cc4c3c" stroke-width="1"/>
<path d="M792.5,457.1 L795.2,459.8 L792.5,462.5 L789.8,459.8 Z" fill="#000" stroke="#cc4c3c" stroke-width="1"/>
<path d="M847.6,331.8 L850.3,334.5 L847.6,337.2 L844.9,334.5 Z" fill="#000" stroke="#cc4c3c" stroke-width="1"/>
<path d="M916.9,224.3 L919.6,227.0 L916.9,229.7 L914.2,227.0 Z" fill="#000" stroke="#cc4c3c" stroke-width="1"/>
<path d="M997.7,308.5 L1000.4,311.2 L997.7,313.9 L995.0,311.2 Z" fill="#000" stroke="#cc4c3c" stroke-width="1"/>
<path d="M1051.8,434.3 L1054.5,437.0 L1051.8,439.7 L1049.1,437.0 Z" fill="#000" stroke="#cc4c3c" stroke-width="1"/>
<path d="M1136.4,507.3 L1139.1,510.0 L1136.4,512.7 L1133.7,510.0 Z" fill="#000" stroke="#cc4c3c" stroke-width="1"/>
<rect x="115.7" y="366.9" width="5.2" height="5.2" fill="#000" stroke="#5cc84a" stroke-width="1.1"/>
<rect x="266.6" y="368.0" width="5.2" height="5.2" fill="#000" stroke="#5cc84a" stroke-width="1.1"/>
<rect x="419.1" y="368.4" width="5.2" height="5.2" fill="#000" stroke="#5cc84a" stroke-width="1.1"/>
<rect x="569.7" y="366.7" width="5.2" height="5.2" fill="#000" stroke="#5cc84a" stroke-width="1.1"/>
<rect x="720.0" y="368.9" width="5.2" height="5.2" fill="#000" stroke="#5cc84a" stroke-width="1.1"/>
<rect x="870.6" y="366.5" width="5.2" height="5.2" fill="#000" stroke="#5cc84a" stroke-width="1.1"/>
<rect x="1021.2" y="368.4" width="5.2" height="5.2" fill="#000" stroke="#5cc84a" stroke-width="1.1"/>
<rect x="109.5" y="579.5" width="5" height="5" fill="none" stroke="#5cc84a" stroke-width="1.2"/>
<path d="M182.2,578.7 L185.5,582 L182.2,585.3 L178.9,582 Z" fill="none" stroke="#c8463a" stroke-width="1"/>
</svg>
<div style="position:absolute;left:0px;top:615.5px;width:1200px;height:1px;background:#fafafa"></div>
<div style="position:absolute;left:0px;top:620px;width:1200px;height:1.3px;background:#8a8a8a"></div>
<div style="position:absolute;left:15px;top:624px;width:459px;height:94.5px;box-sizing:border-box;background:#fff;border-top:1.5px solid #8a8a8a;border-left:1.5px solid #8a8a8a;border-bottom:1px solid #fff;border-right:1px solid #fff"></div>
<div style="position:absolute;left:460px;top:625.5px;width:13.5px;height:92px;background:#f0f0f0"></div>
<div style="position:absolute;left:466.3px;top:664.4px;width:1.2px;height:40px;background:#6a6a6a"></div>
<div style="position:absolute;left:4.5px;top:625.5px;width:8px;height:8px;box-sizing:border-box;background:#f0f0f0;border-top:1px solid #fff;border-left:1px solid #fff;border-right:1px solid #808080;border-bottom:1px solid #808080"></div><svg style="position:absolute;left:6.0px;top:627.0px;" width="5" height="5" viewBox="0 0 5 5"><path d="M0,0 L5,5 M5,0 L0,5" stroke="#000" stroke-width="1.2"/></svg>
<div style="position:absolute;left:4.5px;top:635px;width:8px;height:8.5px;box-sizing:border-box;background:#f0f0f0;border-top:1px solid #fff;border-left:1px solid #fff;border-right:1px solid #808080;border-bottom:1px solid #808080"></div><svg style="position:absolute;left:6.5px;top:636.5px;" width="4" height="6" viewBox="0 0 4 6"><path d="M3.5,0 L0.5,3 L3.5,6 Z" fill="#000"/></svg>
<div style="position:absolute;left:7px;top:645px;width:1px;height:72px;background:#fff;box-shadow:1px 0 0 #a0a0a0,2px 0 0 #fff,3px 0 0 #a0a0a0"></div>
<div style="position:absolute;left:482px;top:622px;width:1.3px;height:102px;background:#555"></div>
<div style="position:absolute;left:486.5px;top:625.5px;width:8px;height:8px;box-sizing:border-box;background:#f0f0f0;border-top:1px solid #fff;border-left:1px solid #fff;border-right:1px solid #808080;border-bottom:1px solid #808080"></div><svg style="position:absolute;left:488.0px;top:627.0px;" width="5" height="5" viewBox="0 0 5 5"><path d="M0,0 L5,5 M5,0 L0,5" stroke="#000" stroke-width="1.2"/></svg>
<div style="position:absolute;left:486.5px;top:634.5px;width:8px;height:8.5px;box-sizing:border-box;background:#f0f0f0;border-top:1px solid #fff;border-left:1px solid #fff;border-right:1px solid #808080;border-bottom:1px solid #808080"></div><svg style="position:absolute;left:488.5px;top:636.0px;" width="4" height="6" viewBox="0 0 4 6"><path d="M3.5,0 L0.5,3 L3.5,6 Z" fill="#000"/></svg>
<div style="position:absolute;left:489px;top:645px;width:1px;height:72px;background:#fff;box-shadow:1px 0 0 #a0a0a0,2px 0 0 #fff,3px 0 0 #a0a0a0"></div>
<div style="position:absolute;left:497.5px;top:624.3px;width:699px;height:94px;box-sizing:border-box;background:#f0f0f0;border-top:1.5px solid #8a8a8a;border-left:1.5px solid #8a8a8a;border-right:1px solid #fff"></div>
<div style="position:absolute;left:502px;top:629px;width:690px;height:75px;box-sizing:border-box;background:#fff;border-top:1.5px solid #707070;border-left:1.5px solid #707070;border-right:1px solid #e0e0e0"></div>
<div style="position:absolute;left:503.5px;top:630.5px;width:687px;height:11.5px;background:#f0f0f0;border-bottom:1px solid #d0d0d0"></div>
<div style="position:absolute;left:604.5px;top:630.5px;width:1px;height:11.5px;background:#c0c0c0;box-shadow:1px 0 0 #fff"></div>
<div style="position:absolute;left:751.5px;top:630.5px;width:1px;height:11.5px;background:#c0c0c0;box-shadow:1px 0 0 #fff"></div>
<div style="position:absolute;left:827px;top:630.5px;width:1px;height:11.5px;background:#c0c0c0;box-shadow:1px 0 0 #fff"></div>
<div style="position:absolute;left:498.5px;top:704px;width:14px;height:14px;box-sizing:border-box;background:#f0f0f0;border:1px solid #c8c8c8"></div>
<div style="position:absolute;left:512px;top:704px;width:14px;height:14px;box-sizing:border-box;background:#f0f0f0;border:1px solid #c8c8c8"></div>
<svg style="position:absolute;left:502px;top:707px;" width="7" height="8" viewBox="0 0 7 8"><path d="M6,0 L1,4 L6,8 Z" fill="#b0b0b0"/></svg>
<svg style="position:absolute;left:516px;top:707px;" width="7" height="8" viewBox="0 0 7 8"><path d="M1,0 L6,4 L1,8 Z" fill="#b0b0b0"/></svg>
<div style="position:absolute;left:527px;top:706.5px;width:669px;height:1px;background:#6a6a6a"></div>
<svg style="position:absolute;left:520px;top:704px;" width="140" height="16" viewBox="0 0 140 16"><path d="M8,2.5 H52 L48.5,14 H11.5 Z" fill="#fff"/><path d="M7,2.5 L11,14 M49,14 L53,2.5 M52.5,2.5 L56,14 M83,14 L87,2.5 M86.5,2.5 L90,14 M128,14 L132,2.5" fill="none" stroke="#222" stroke-width="1.1"/></svg>
<div style="position:absolute;left:0px;top:723.5px;width:1200px;height:1px;background:#c0c0c0"></div>
<div style="position:absolute;left:0px;top:721px;width:1200px;height:1px;background:#fafafa"></div>
<div style="position:absolute;left:0px;top:725.3px;width:1200px;height:1px;background:#fff"></div>
<div style="position:absolute;left:0px;top:727px;width:919px;height:13px;box-sizing:border-box;border-top:1px solid #c8c8c8;border-right:1px solid #fff"></div>
<div style="position:absolute;left:922px;top:727px;width:123px;height:13px;box-sizing:border-box;border-top:1px solid #a0a0a0;border-left:1px solid #a0a0a0;border-bottom:1px solid #fff;border-right:1px solid #fff"></div>
<div style="position:absolute;left:1048px;top:727px;width:36px;height:13px;box-sizing:border-box;border-top:1px solid #a0a0a0;border-left:1px solid #a0a0a0;border-bottom:1px solid #fff;border-right:1px solid #fff"></div>
<div style="position:absolute;left:1086px;top:727.5px;width:80px;height:12px;box-sizing:border-box;border-top:1px solid #a0a0a0;border-left:1px solid #a0a0a0;background:#f0f0f0"></div>
<div style="position:absolute;left:1088.0px;top:729px;width:6.3px;height:10px;background:#2d78d8"></div>
<div style="position:absolute;left:1095.8px;top:729px;width:6.3px;height:10px;background:#2d78d8"></div>
<div style="position:absolute;left:1103.6px;top:729px;width:6.3px;height:10px;background:#2d78d8"></div>
<div style="position:absolute;left:1111.4px;top:729px;width:6.3px;height:10px;background:#2d78d8"></div>
<div style="position:absolute;left:1119.2px;top:729px;width:6.3px;height:10px;background:#2d78d8"></div>
<div style="position:absolute;left:1127.0px;top:729px;width:6.3px;height:10px;background:#2d78d8"></div>
<div style="position:absolute;left:1134.8px;top:729px;width:6.3px;height:10px;background:#2d78d8"></div>
<div style="position:absolute;left:1142.6px;top:729px;width:6.3px;height:10px;background:#2d78d8"></div>
<div style="position:absolute;left:1150.4px;top:729px;width:6.3px;height:10px;background:#2d78d8"></div>
<div style="position:absolute;left:1158.2px;top:729px;width:6.3px;height:10px;background:#2d78d8"></div>
<div style="position:absolute;left:1172px;top:728px;width:27px;height:12px;background:#000"></div>
<svg style="position:absolute;left:1172px;top:728px;" width="27" height="12" viewBox="0 0 27 12"><path d="M0,6.5 H6 L9,2.5 L12,9.5 L15.5,2.5 L18.5,9 L21,6 H27" fill="none" stroke="#40b8e0" stroke-width="1.2"/></svg>
<div style="position:absolute;left:0px;top:741px;width:1200px;height:38px;background:linear-gradient(90deg,#1f2533 0%,#1e2436 18%,#1a2248 32%,#172050 50%,#1a2248 66%,#1e2436 76%,#1f2533 100%);border-radius:0 0 10px 10px"></div>
<svg style="position:absolute;left:15px;top:746px;" width="22" height="24" viewBox="0 0 22 24"><path d="M1.5,15 Q8,11 14,9" fill="none" stroke="#60c040" stroke-width="1.8"/><rect x="1" y="20" width="2.5" height="2" fill="#60c040"/><rect x="5" y="19" width="2.5" height="3" fill="#60c040"/><rect x="9" y="17" width="2.5" height="5" fill="#60c040"/><rect x="13" y="14" width="2.5" height="8" fill="#60c040"/><rect x="17" y="11" width="2.5" height="11" fill="#60c040"/><circle cx="15" cy="6.2" r="5.5" fill="#f0a0b0"/><text x="12.8" y="9.2" font-family="Liberation Sans" font-size="8" fill="#111">1</text></svg>
<svg style="position:absolute;left:309.8px;top:750.8px;" width="19" height="19" viewBox="0 0 19 19"><defs><linearGradient id="wl" x1="0" y1="0" x2="1" y2="1"><stop offset="0" stop-color="#8ad8ff"/><stop offset="1" stop-color="#1a8ef0"/></linearGradient></defs><rect x="0" y="0" width="9" height="9" rx="1" fill="url(#wl)"/><rect x="10" y="0" width="9" height="9" rx="1" fill="url(#wl)"/><rect x="0" y="10" width="9" height="9" rx="1" fill="url(#wl)"/><rect x="10" y="10" width="9" height="9" rx="1" fill="url(#wl)"/></svg>
<div style="position:absolute;left:339px;top:747px;width:174.4px;height:26px;background:#39446a;border-radius:13px"></div>
<svg style="position:absolute;left:348px;top:753.5px;" width="12" height="13" viewBox="0 0 12 13"><circle cx="5" cy="5" r="4.2" fill="none" stroke="#e0e4ee" stroke-width="1.4"/><path d="M8,8.2 L11.3,11.8" stroke="#e0e4ee" stroke-width="1.6"/></svg>
<svg style="position:absolute;left:472px;top:753px;" width="37" height="15" viewBox="0 0 37 15"><path d="M0,9 L8,1 L15,4 L7,12 Z" fill="#6ab8e0"/><path d="M7,12 L15,4 L16,7 L9,14 Z" fill="#4a98c8"/><ellipse cx="29" cy="9" rx="7.5" ry="5" fill="#c88860"/><circle cx="25" cy="5" r="3" fill="#50b040"/><circle cx="31" cy="4" r="3" fill="#e04830"/><circle cx="34" cy="6" r="2.5" fill="#70c040"/></svg>
<svg style="position:absolute;left:523px;top:752px;" width="19" height="16" viewBox="0 0 19 16"><rect x="0" y="5" width="13" height="11" fill="#555"/><rect x="6" y="0" width="13" height="11" fill="#e8e8e8"/><rect x="6" y="5" width="7" height="6" fill="#aaa"/></svg>
<svg style="position:absolute;left:558px;top:751px;" width="19" height="17" viewBox="0 0 19 17"><defs><linearGradient id="cpl" x1="0" y1="0" x2="0.3" y2="1"><stop offset="0" stop-color="#38a8f0"/><stop offset="0.55" stop-color="#50d0a0"/><stop offset="1" stop-color="#f0d040"/></linearGradient><linearGradient id="cpr" x1="0.2" y1="0" x2="0" y2="1"><stop offset="0" stop-color="#7a70f0"/><stop offset="0.5" stop-color="#e060c0"/><stop offset="1" stop-color="#f08030"/></linearGradient></defs><path d="M6,1 H11 Q13,1 12,4 L9,12 Q8,14.5 5.5,14.5 H3 Q0.5,14.5 1.2,12 L4,3 Q4.6,1 6,1 Z" fill="url(#cpl)"/><path d="M13,2.5 H15.5 Q18,2.5 17.5,5 L15,13.5 Q14.4,16 12.5,16 H8 Q6,16 7,13.5 L10,5 Q11,2.5 13,2.5 Z" fill="url(#cpr)"/></svg>
<svg style="position:absolute;left:592.4px;top:752px;" width="20" height="16" viewBox="0 0 20 16"><path d="M0,1 H7 L9,3 H19 V15 H0 Z" fill="#e8b830"/><rect x="0" y="4" width="20" height="12" fill="#f8d860"/><rect x="5" y="11" width="10" height="5" fill="#3a90e0"/></svg>
<svg style="position:absolute;left:627.5px;top:750px;" width="20" height="20" viewBox="0 0 20 20"><defs><linearGradient id="eg" x1="1" y1="0" x2="0" y2="1"><stop offset="0" stop-color="#60d880"/><stop offset="0.45" stop-color="#30a8e0"/><stop offset="1" stop-color="#1458b0"/></linearGradient></defs><circle cx="10" cy="10" r="9.8" fill="url(#eg)"/><path d="M19.8,10.5 Q19,6.5 14,6.5 Q9,6.5 8.5,11 Q8.5,15 13,16 Q9,17.5 5.5,15 Q2,12 4,7.5 Q2.5,13 7.5,13.8 Q6,9 10,7 Q15,5 18.5,8 Z" fill="#1c4a9a"/><ellipse cx="14.5" cy="11" rx="5.3" ry="3.2" fill="#172050"/></svg>
<svg style="position:absolute;left:662.4px;top:751px;" width="19" height="17" viewBox="0 0 19 17"><path d="M6,3 Q6,0 9.5,0 Q13,0 13,3" fill="none" stroke="#3aa8e8" stroke-width="1.3"/><rect x="0.5" y="3" width="18" height="14" rx="2" fill="#f4f4f4"/><rect x="6" y="7" width="3" height="3" fill="#f05030"/><rect x="10" y="7" width="3" height="3" fill="#70c030"/><rect x="6" y="11" width="3" height="3" fill="#30a0e8"/><rect x="10" y="11" width="3" height="3" fill="#f8c020"/></svg>
<svg style="position:absolute;left:697.4px;top:751.5px;" width="20" height="17" viewBox="0 0 20 17"><rect x="6" y="1" width="14" height="15" rx="2" fill="#3aa0e8"/><path d="M6,8 L13,13 L20,8 V16 H6 Z" fill="#60c0f0"/><rect x="0" y="4" width="11" height="10" rx="1.5" fill="#1a66c0"/><text x="2" y="12.5" font-family="Liberation Sans" font-weight="bold" font-size="9" fill="#fff">O</text></svg>
<svg style="position:absolute;left:732px;top:751px;" width="20" height="18" viewBox="0 0 20 18"><path d="M2.5,9 A7.5,7 0 0 1 17,6.5" fill="none" stroke="#111" stroke-width="5.6"/><path d="M17.5,9 A7.5,7 0 0 1 3,11.5" fill="none" stroke="#111" stroke-width="5.6"/><path d="M2.5,9 A7.5,7 0 0 1 17,6.5" fill="none" stroke="#60e040" stroke-width="3.8"/><path d="M17.5,9 A7.5,7 0 0 1 3,11.5" fill="none" stroke="#f0f040" stroke-width="3.8"/></svg>
<div style="position:absolute;left:740px;top:773.5px;width:5px;height:1.6px;background:#888;border-radius:1px"></div>
<svg style="position:absolute;left:767px;top:751.5px;" width="20" height="17" viewBox="0 0 20 17"><rect x="1" y="1" width="16" height="14" fill="#f4f4f4" stroke="#333"/><path d="M1,5 H17 M1,9 H17" stroke="#555"/><circle cx="3" cy="3" r="1.3" fill="#2030e0"/><circle cx="3" cy="7" r="1.5" fill="#e02020"/><circle cx="3" cy="11" r="1.3" fill="#2030e0"/><path d="M14,10 L19,16" stroke="#c02020" stroke-width="2"/></svg>
<div style="position:absolute;left:774.5px;top:773.5px;width:5px;height:1.6px;background:#888;border-radius:1px"></div>
<svg style="position:absolute;left:802px;top:751.5px;" width="20" height="17" viewBox="0 0 20 17"><rect x="1" y="1" width="15" height="13" fill="#f8f8f8" stroke="#333"/><path d="M3,4 H10 M3,7 H10 M3,10 H10" stroke="#333"/><rect x="12" y="4" width="4" height="3" fill="#30a030"/><path d="M0,8 H19 L15,16 H0 Z" fill="#d8d070" stroke="#555"/></svg>
<div style="position:absolute;left:809.5px;top:773.5px;width:5px;height:1.6px;background:#888;border-radius:1px"></div>
<svg style="position:absolute;left:837px;top:751.5px;" width="20" height="17" viewBox="0 0 20 17"><rect x="1" y="3" width="15" height="13" fill="#f0e890" stroke="#333"/><path d="M4,6 V12 M3,12 H6" stroke="#333"/><path d="M8,13 L18,1" stroke="#e03030" stroke-width="2.5"/><path d="M8,13 L10,10" stroke="#222" stroke-width="1.5"/></svg>
<div style="position:absolute;left:844.5px;top:773.5px;width:5px;height:1.6px;background:#888;border-radius:1px"></div>
<div style="position:absolute;left:866px;top:743.6px;width:32px;height:31.4px;background:rgba(255,255,255,0.07);border-radius:5px"></div>
<svg style="position:absolute;left:872px;top:751px;" width="20" height="17" viewBox="0 0 20 17"><rect x="0" y="4" width="17" height="12" fill="#e8e070"/><rect x="4" y="0" width="14" height="11" fill="#222" stroke="#ddd"/><path d="M6,3 L8,7 L11,2 L14,7 L16,4" stroke="#30e030" fill="none"/><path d="M2,13 H17" stroke="#333"/></svg>
<div style="position:absolute;left:875px;top:773.6px;width:13px;height:1.8px;background:#5ab0f0;border-radius:1px"></div>
<svg style="position:absolute;left:1033px;top:756px;" width="11" height="7" viewBox="0 0 11 7"><path d="M1,6 L5.5,1.2 L10,6" fill="none" stroke="#f0f0f0" stroke-width="1.3"/></svg>
<svg style="position:absolute;left:1056.5px;top:753px;" width="14" height="14" viewBox="0 0 14 14"><path d="M2,6 A5,5 0 0 1 11,3.5" fill="none" stroke="#f0f0f0" stroke-width="1.1"/><path d="M11,1 V4 H8" fill="none" stroke="#f0f0f0"/><path d="M1.5,9 A5,5 0 0 0 5,12.5" fill="none" stroke="#f0f0f0" stroke-width="1.1"/><circle cx="10" cy="10" r="3.3" fill="#2a7be8"/></svg>
<svg style="position:absolute;left:1081.5px;top:753px;" width="14" height="14" viewBox="0 0 14 14"><rect x="0.5" y="1.5" width="9.5" height="8" fill="none" stroke="#f0f0f0" stroke-width="1.1"/><path d="M3,12.5 H8 M5.3,9.5 V12.5" stroke="#f0f0f0"/><rect x="10.5" y="0.5" width="3" height="4" fill="none" stroke="#f0f0f0"/><path d="M12,4.5 V12" stroke="#f0f0f0"/></svg>
<svg style="position:absolute;left:1100.5px;top:753px;" width="15" height="14" viewBox="0 0 15 14"><path d="M0.5,5 H3 L7,1.5 V12.5 L3,9 H0.5 Z" fill="none" stroke="#f0f0f0" stroke-width="1.1"/><path d="M9,4.5 Q10.5,7 9,9.5 M11,3 Q13.5,7 11,11" fill="none" stroke="#f0f0f0" stroke-width="1.1"/></svg>
<svg style="position:absolute;left:1120px;top:753px;" width="14" height="14" viewBox="0 0 14 14"><rect x="0.5" y="4.5" width="11" height="7" rx="1.2" fill="none" stroke="#f0f0f0" stroke-width="1.1"/><rect x="2" y="6" width="8" height="4" fill="#f0f0f0"/><path d="M12.3,6.5 V9.5" stroke="#f0f0f0" stroke-width="1.3"/><path d="M5,0.5 L2,5 H5 L3,8" fill="none" stroke="#f0f0f0"/></svg>
<div style="position:absolute;left:41.8px;top:7.62px;font-family:'Liberation Sans', sans-serif;font-size:11.5px;line-height:11.5px;font-weight:bold;color:#f2f2f2;white-space:pre;transform:scaleX(0.8902);transform-origin:0 0;">Windows 11</div>
<div style="position:absolute;left:115.9px;top:7.62px;font-family:'Liberation Sans', sans-serif;font-size:11.5px;line-height:11.5px;font-weight:normal;color:#f2f2f2;white-space:pre;transform:scaleX(0.8796);transform-origin:0 0;">File</div>
<div style="position:absolute;left:148px;top:7.62px;font-family:'Liberation Sans', sans-serif;font-size:11.5px;line-height:11.5px;font-weight:normal;color:#f2f2f2;white-space:pre;transform:scaleX(0.9456);transform-origin:0 0;">Modifica</div>
<div style="position:absolute;left:203.7px;top:7.62px;font-family:'Liberation Sans', sans-serif;font-size:11.5px;line-height:11.5px;font-weight:normal;color:#f2f2f2;white-space:pre;transform:scaleX(0.9151);transform-origin:0 0;">Visualizza</div>
<div style="position:absolute;left:266.3px;top:7.62px;font-family:'Liberation Sans', sans-serif;font-size:11.5px;line-height:11.5px;font-weight:normal;color:#f2f2f2;white-space:pre;transform:scaleX(0.9129);transform-origin:0 0;">Azioni</div>
<div style="position:absolute;left:309.6px;top:7.62px;font-family:'Liberation Sans', sans-serif;font-size:11.5px;line-height:11.5px;font-weight:normal;color:#f2f2f2;white-space:pre;transform:scaleX(0.9543);transform-origin:0 0;">Dispositivi</div>
<div style="position:absolute;left:374px;top:7.62px;font-family:'Liberation Sans', sans-serif;font-size:11.5px;line-height:11.5px;font-weight:normal;color:#f2f2f2;white-space:pre;transform:scaleX(0.9314);transform-origin:0 0;">Sviluppo</div>
<div style="position:absolute;left:430.5px;top:7.62px;font-family:'Liberation Sans', sans-serif;font-size:11.5px;line-height:11.5px;font-weight:normal;color:#f2f2f2;white-space:pre;transform:scaleX(0.9122);transform-origin:0 0;">Finestra</div>
<div style="position:absolute;left:483.4px;top:7.62px;font-family:'Liberation Sans', sans-serif;font-size:11.5px;line-height:11.5px;font-weight:normal;color:#f2f2f2;white-space:pre;transform:scaleX(0.9344);transform-origin:0 0;">Aiuto</div>
<div style="position:absolute;left:801px;top:7.83px;font-family:'Liberation Sans', sans-serif;font-size:11.5px;line-height:11.5px;font-weight:normal;color:#f2f2f2;white-space:pre;transform:scaleX(0.9775);transform-origin:0 0;">49°</div>
<div style="position:absolute;left:886px;top:7.83px;font-family:'Liberation Sans', sans-serif;font-size:11.5px;line-height:11.5px;font-weight:normal;color:#f2f2f2;white-space:pre;transform:scaleX(0.9118);transform-origin:0 0;">71%</div>
<div style="position:absolute;left:1104.3px;top:7.53px;font-family:'Liberation Sans', sans-serif;font-size:11.5px;line-height:11.5px;font-weight:normal;color:#f2f2f2;white-space:pre;transform:scaleX(0.9250);transform-origin:0 0;">Mar 6 gen</div>
<div style="position:absolute;left:1158.5px;top:7.53px;font-family:'Liberation Sans', sans-serif;font-size:11.5px;line-height:11.5px;font-weight:normal;color:#f2f2f2;white-space:pre;transform:scaleX(0.9694);transform-origin:0 0;">20:56</div>
<div style="position:absolute;left:565.8px;top:35.52px;font-family:'Liberation Sans', sans-serif;font-size:13.5px;line-height:13.5px;font-weight:normal;color:#c2c2c2;white-space:pre;transform:scaleX(0.9196);transform-origin:0 0;">Windows 11</div>
<div style="position:absolute;left:19.5px;top:61.76px;font-family:'Liberation Sans', sans-serif;font-size:10.4px;line-height:10.4px;font-weight:normal;color:#222;white-space:pre;transform:scaleX(0.9138);transform-origin:0 0;">progetto - OrCAD PSpice A/D Demo</div>
<div style="position:absolute;left:12px;top:82.79px;font-family:'Liberation Sans', sans-serif;font-size:10.6px;line-height:10.6px;font-weight:normal;color:#1a1a1a;white-space:pre;transform:scaleX(0.8198);transform-origin:0 0;">File</div>
<div style="position:absolute;left:34px;top:82.79px;font-family:'Liberation Sans', sans-serif;font-size:10.6px;line-height:10.6px;font-weight:normal;color:#1a1a1a;white-space:pre;transform:scaleX(0.8541);transform-origin:0 0;">Edit</div>
<div style="position:absolute;left:58px;top:82.79px;font-family:'Liberation Sans', sans-serif;font-size:10.6px;line-height:10.6px;font-weight:normal;color:#1a1a1a;white-space:pre;transform:scaleX(0.8472);transform-origin:0 0;">View</div>
<div style="position:absolute;left:85.7px;top:82.79px;font-family:'Liberation Sans', sans-serif;font-size:10.6px;line-height:10.6px;font-weight:normal;color:#1a1a1a;white-space:pre;transform:scaleX(0.9036);transform-origin:0 0;">Simulation</div>
<div style="position:absolute;left:138.7px;top:82.79px;font-family:'Liberation Sans', sans-serif;font-size:10.6px;line-height:10.6px;font-weight:normal;color:#1a1a1a;white-space:pre;transform:scaleX(0.8169);transform-origin:0 0;">Trace</div>
<div style="position:absolute;left:169px;top:82.79px;font-family:'Liberation Sans', sans-serif;font-size:10.6px;line-height:10.6px;font-weight:normal;color:#1a1a1a;white-space:pre;transform:scaleX(0.9143);transform-origin:0 0;">Plot</div>
<div style="position:absolute;left:194px;top:82.79px;font-family:'Liberation Sans', sans-serif;font-size:10.6px;line-height:10.6px;font-weight:normal;color:#1a1a1a;white-space:pre;transform:scaleX(0.8733);transform-origin:0 0;">Tools</div>
<div style="position:absolute;left:223.7px;top:82.79px;font-family:'Liberation Sans', sans-serif;font-size:10.6px;line-height:10.6px;font-weight:normal;color:#1a1a1a;white-space:pre;transform:scaleX(0.9287);transform-origin:0 0;">Window</div>
<div style="position:absolute;left:266.7px;top:82.79px;font-family:'Liberation Sans', sans-serif;font-size:10.6px;line-height:10.6px;font-weight:normal;color:#1a1a1a;white-space:pre;transform:scaleX(0.8854);transform-origin:0 0;">Help</div>
<div style="position:absolute;left:250.3px;top:108.00px;font-family:'Liberation Sans', sans-serif;font-size:10px;line-height:10px;font-weight:normal;color:#000;white-space:pre;transform:scaleX(0.8310);transform-origin:0 0;">progetto</div>
<div style="position:absolute;left:70.95px;top:224.48px;font-family:'Liberation Mono', monospace;font-size:11.6px;line-height:11.6px;font-weight:bold;color:#b8b8b8;white-space:pre;transform:scaleX(0.8981);transform-origin:0 0;">1.00V</div>
<div style="position:absolute;left:89.7px;top:365.78px;font-family:'Liberation Mono', monospace;font-size:11.6px;line-height:11.6px;font-weight:bold;color:#b8b8b8;white-space:pre;transform:scaleX(0.8979);transform-origin:0 0;">0V</div>
<div style="position:absolute;left:64.7px;top:507.68px;font-family:'Liberation Mono', monospace;font-size:11.6px;line-height:11.6px;font-weight:bold;color:#b8b8b8;white-space:pre;transform:scaleX(0.8982);transform-origin:0 0;">-1.00V</div>
<div style="position:absolute;left:64.7px;top:553.08px;font-family:'Liberation Mono', monospace;font-size:11.6px;line-height:11.6px;font-weight:bold;color:#b8b8b8;white-space:pre;transform:scaleX(0.8982);transform-origin:0 0;">-1.32V</div>
<div style="position:absolute;left:89.65px;top:564.38px;font-family:'Liberation Mono', monospace;font-size:11.6px;line-height:11.6px;font-weight:bold;color:#b8b8b8;white-space:pre;transform:scaleX(0.8982);transform-origin:0 0;">12.6us</div>
<div style="position:absolute;left:203.72px;top:564.38px;font-family:'Liberation Mono', monospace;font-size:11.6px;line-height:11.6px;font-weight:bold;color:#b8b8b8;white-space:pre;transform:scaleX(0.8982);transform-origin:0 0;">50.0us</div>
<div style="position:absolute;left:353.1px;top:564.38px;font-family:'Liberation Mono', monospace;font-size:11.6px;line-height:11.6px;font-weight:bold;color:#b8b8b8;white-space:pre;transform:scaleX(0.8983);transform-origin:0 0;">100.0us</div>
<div style="position:absolute;left:505.6px;top:564.38px;font-family:'Liberation Mono', monospace;font-size:11.6px;line-height:11.6px;font-weight:bold;color:#b8b8b8;white-space:pre;transform:scaleX(0.8983);transform-origin:0 0;">150.0us</div>
<div style="position:absolute;left:658.09px;top:564.38px;font-family:'Liberation Mono', monospace;font-size:11.6px;line-height:11.6px;font-weight:bold;color:#b8b8b8;white-space:pre;transform:scaleX(0.8983);transform-origin:0 0;">200.0us</div>
<div style="position:absolute;left:810.59px;top:564.38px;font-family:'Liberation Mono', monospace;font-size:11.6px;line-height:11.6px;font-weight:bold;color:#b8b8b8;white-space:pre;transform:scaleX(0.8983);transform-origin:0 0;">250.0us</div>
<div style="position:absolute;left:963.09px;top:564.38px;font-family:'Liberation Mono', monospace;font-size:11.6px;line-height:11.6px;font-weight:bold;color:#b8b8b8;white-space:pre;transform:scaleX(0.8983);transform-origin:0 0;">300.0us</div>
<div style="position:absolute;left:1115.6px;top:564.38px;font-family:'Liberation Mono', monospace;font-size:11.6px;line-height:11.6px;font-weight:bold;color:#b8b8b8;white-space:pre;transform:scaleX(0.8983);transform-origin:0 0;">350.0us</div>
<div style="position:absolute;left:120.8px;top:576.94px;font-family:'Liberation Mono', monospace;font-size:11px;line-height:11px;font-weight:bold;color:#b8b8b8;white-space:pre;transform:scaleX(0.9467);transform-origin:0 0;">V(Rin:2)</div>
<div style="position:absolute;left:190.8px;top:576.94px;font-family:'Liberation Mono', monospace;font-size:11px;line-height:11px;font-weight:bold;color:#b8b8b8;white-space:pre;transform:scaleX(0.9390);transform-origin:0 0;">V(M2:d)</div>
<div style="position:absolute;left:60.8px;top:170.65px;font-family:'Liberation Sans', sans-serif;font-size:11px;line-height:11px;font-weight:normal;color:#1a1a2a;white-space:pre;transform:scaleX(0.8681);transform-origin:0 0;">progetto (active)</div>
<div style="position:absolute;left:50.5px;top:600.00px;font-family:'Liberation Sans', sans-serif;font-size:10px;line-height:10px;font-weight:normal;color:#1a1a3a;white-space:pre;transform:scaleX(0.8529);transform-origin:0 0;">progetto (act...</div>
<div style="position:absolute;left:29px;top:625.34px;font-family:'Liberation Sans', sans-serif;font-size:9.6px;line-height:9.6px;font-weight:normal;color:#111;white-space:pre;transform:scaleX(0.8782);transform-origin:0 0;">Circuit read in and checked, no errors</div>
<div style="position:absolute;left:29px;top:636.41px;font-family:'Liberation Sans', sans-serif;font-size:9.6px;line-height:9.6px;font-weight:normal;color:#111;white-space:pre;transform:scaleX(0.8278);transform-origin:0 0;">Calculating bias point</div>
<div style="position:absolute;left:29px;top:647.48px;font-family:'Liberation Sans', sans-serif;font-size:9.6px;line-height:9.6px;font-weight:normal;color:#111;white-space:pre;transform:scaleX(0.7841);transform-origin:0 0;">Bias point calculated</div>
<div style="position:absolute;left:29px;top:658.55px;font-family:'Liberation Sans', sans-serif;font-size:9.6px;line-height:9.6px;font-weight:normal;color:#111;white-space:pre;transform:scaleX(0.8646);transform-origin:0 0;">Calculating bias point for Transient Analysis</div>
<div style="position:absolute;left:29px;top:669.62px;font-family:'Liberation Sans', sans-serif;font-size:9.6px;line-height:9.6px;font-weight:normal;color:#111;white-space:pre;transform:scaleX(0.7841);transform-origin:0 0;">Bias point calculated</div>
<div style="position:absolute;left:29px;top:680.69px;font-family:'Liberation Sans', sans-serif;font-size:9.6px;line-height:9.6px;font-weight:normal;color:#111;white-space:pre;transform:scaleX(0.8645);transform-origin:0 0;">Transient Analysis</div>
<div style="position:absolute;left:29px;top:691.76px;font-family:'Liberation Sans', sans-serif;font-size:9.6px;line-height:9.6px;font-weight:normal;color:#111;white-space:pre;transform:scaleX(0.8655);transform-origin:0 0;">Transient Analysis finished</div>
<div style="position:absolute;left:29px;top:702.83px;font-family:'Liberation Sans', sans-serif;font-size:9.6px;line-height:9.6px;font-weight:normal;color:#111;white-space:pre;transform:scaleX(0.8624);transform-origin:0 0;">Simulation complete</div>
<div style="position:absolute;left:507px;top:665.76px;font-family:'Liberation Sans', sans-serif;font-size:10.4px;line-height:10.4px;font-weight:normal;color:#111;white-space:pre;transform:scaleX(0.8061);transform-origin:0 0;">Time step =  25.27E-09</div>
<div style="position:absolute;left:611px;top:665.76px;font-family:'Liberation Sans', sans-serif;font-size:10.4px;line-height:10.4px;font-weight:normal;color:#111;white-space:pre;transform:scaleX(0.8198);transform-origin:0 0;">Time =  1.000E-03</div>
<div style="position:absolute;left:758px;top:665.76px;font-family:'Liberation Sans', sans-serif;font-size:10.4px;line-height:10.4px;font-weight:normal;color:#111;white-space:pre;transform:scaleX(0.8131);transform-origin:0 0;">End =  1.000E-03</div>
<div style="position:absolute;left:534.9px;top:708.64px;font-family:'Liberation Sans', sans-serif;font-size:9.6px;line-height:9.6px;font-weight:normal;color:#111;white-space:pre;transform:scaleX(0.8479);transform-origin:0 0;">Analysis</div>
<div style="position:absolute;left:577.3px;top:708.64px;font-family:'Liberation Sans', sans-serif;font-size:9.6px;line-height:9.6px;font-weight:normal;color:#111;white-space:pre;transform:scaleX(0.9574);transform-origin:0 0;">Watch</div>
<div style="position:absolute;left:614.7px;top:708.64px;font-family:'Liberation Sans', sans-serif;font-size:9.6px;line-height:9.6px;font-weight:normal;color:#111;white-space:pre;transform:scaleX(0.8879);transform-origin:0 0;">Devices</div>
<div style="position:absolute;left:924.3px;top:728.85px;font-family:'Liberation Sans', sans-serif;font-size:11px;line-height:11px;font-weight:normal;color:#111;white-space:pre;transform:scaleX(0.8151);transform-origin:0 0;">Time= 1.000E-03</div>
<div style="position:absolute;left:1052.5px;top:728.85px;font-family:'Liberation Sans', sans-serif;font-size:11px;line-height:11px;font-weight:normal;color:#111;white-space:pre;transform:scaleX(0.7534);transform-origin:0 0;">100%</div>
<div style="position:absolute;left:40px;top:748.54px;font-family:'Liberation Sans', sans-serif;font-size:9.6px;line-height:9.6px;font-weight:normal;color:#e8e8e8;white-space:pre;transform:scaleX(0.9628);transform-origin:0 0;">S&amp;P 500</div>
<div style="position:absolute;left:40px;top:761.88px;font-family:'Liberation Sans', sans-serif;font-size:9.2px;line-height:9.2px;font-weight:normal;color:#6cc04a;white-space:pre;transform:scaleX(1.0089);transform-origin:0 0;">+0.65%</div>
<div style="position:absolute;left:368.4px;top:755.15px;font-family:'Liberation Sans', sans-serif;font-size:11px;line-height:11px;font-weight:normal;color:#c8ccd8;white-space:pre;transform:scaleX(0.9294);transform-origin:0 0;">Search</div>
<div style="position:absolute;left:1150px;top:748.88px;font-family:'Liberation Sans', sans-serif;font-size:9.2px;line-height:9.2px;font-weight:normal;color:#f0f0f0;white-space:pre;transform:scaleX(1.0141);transform-origin:0 0;">8:56 PM</div>
<div style="position:absolute;left:1146.3px;top:761.88px;font-family:'Liberation Sans', sans-serif;font-size:9.2px;line-height:9.2px;font-weight:normal;color:#f0f0f0;white-space:pre;transform:scaleX(1.0820);transform-origin:0 0;">1/6/2026</div>
</body></html>
